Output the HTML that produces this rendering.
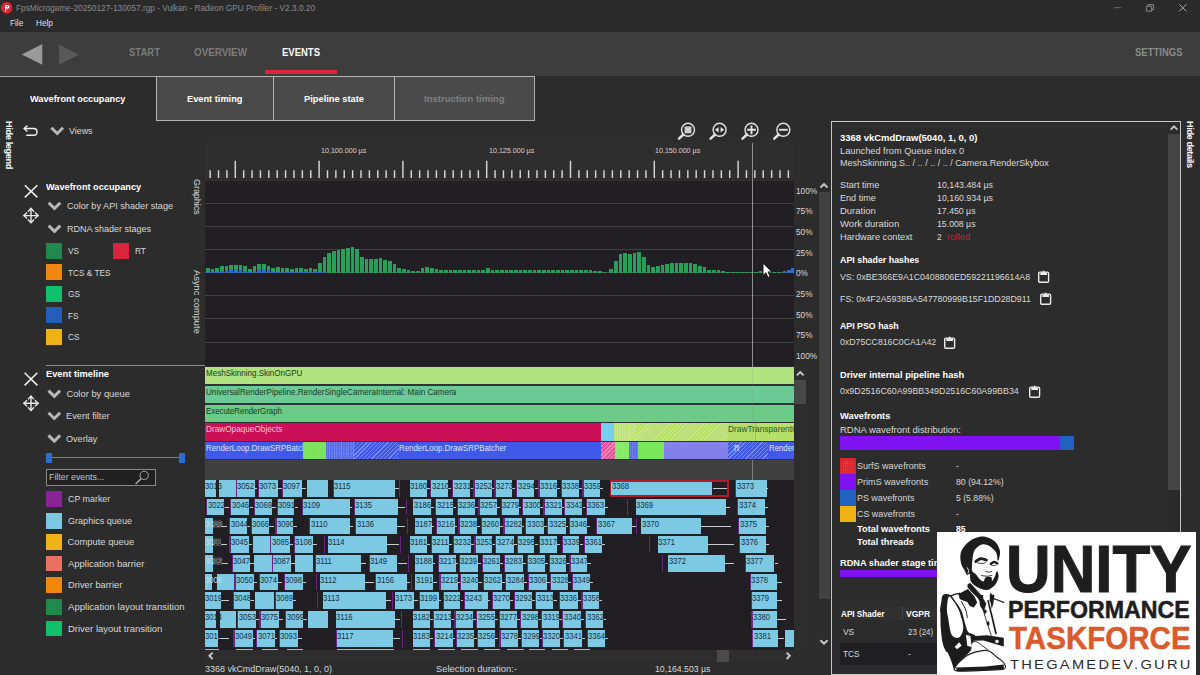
<!DOCTYPE html>
<html><head><meta charset="utf-8"><title>Radeon GPU Profiler</title>
<style>
html,body{margin:0;padding:0;background:#2c2c2c;}
body{width:1200px;height:675px;overflow:hidden;position:relative;font-family:"Liberation Sans", sans-serif;}
.r div{position:absolute;}
.t span{position:absolute;white-space:pre;line-height:1;transform-origin:0 0;}
.c{position:absolute;overflow:hidden;}
.v{position:absolute;white-space:pre;line-height:1;transform-origin:0 0;transform:rotate(90deg);font-weight:700;color:#fff;}
svg{position:absolute;overflow:visible;}
</style></head><body>
<div class="r">
<div style="left:0.00px;top:0.00px;width:1200.00px;height:31.80px;background:#2a2a2a;"></div>
<div style="left:0.00px;top:31.80px;width:1200.00px;height:44.20px;background:#3d3d3d;"></div>
<div style="left:0.00px;top:76.00px;width:1200.00px;height:599.00px;background:#2c2c2c;"></div>
<div style="left:264.50px;top:70.00px;width:72.00px;height:4.00px;background:#d8283c;"></div>
<div style="left:0.00px;top:76.00px;width:156.50px;height:1.00px;background:#a4a4a4;"></div>
<div style="left:156.00px;top:76.00px;width:379.00px;height:44.70px;background:#4a4a4a;border:1px solid #b4b4b4;box-sizing:border-box;"></div>
<div style="left:273.00px;top:76.00px;width:1.00px;height:44.70px;background:#b4b4b4;"></div>
<div style="left:394.00px;top:76.00px;width:1.00px;height:44.70px;background:#b4b4b4;"></div>
<div style="left:45.90px;top:242.60px;width:16.30px;height:16.00px;background:#1f8a4c;"></div>
<div style="left:45.90px;top:264.30px;width:16.30px;height:16.00px;background:#f0880f;"></div>
<div style="left:45.90px;top:286.00px;width:16.30px;height:16.00px;background:#12c06a;"></div>
<div style="left:45.90px;top:307.40px;width:16.30px;height:16.00px;background:#215fb8;"></div>
<div style="left:45.90px;top:328.90px;width:16.30px;height:16.00px;background:#f0b215;"></div>
<div style="left:113.20px;top:242.60px;width:16.20px;height:16.00px;background:#d9263e;"></div>
<div style="left:46.00px;top:365.00px;width:159.00px;height:1.00px;background:#8a8a8a;"></div>
<div style="left:46.00px;top:457.20px;width:138.60px;height:1.10px;background:#7a8288;"></div>
<div style="left:46.00px;top:452.50px;width:5.90px;height:10.40px;background:#2a6fd0;"></div>
<div style="left:178.80px;top:452.50px;width:5.80px;height:10.40px;background:#2a6fd0;"></div>
<div style="left:46.00px;top:468.70px;width:109.60px;height:17.00px;background:#202020;border:1px solid #8a8a8a;box-sizing:border-box;"></div>
<div style="left:45.70px;top:491.40px;width:16.60px;height:15.80px;background:#8a2298;"></div>
<div style="left:45.70px;top:513.00px;width:16.60px;height:15.80px;background:#7bc8e2;"></div>
<div style="left:45.70px;top:534.30px;width:16.60px;height:15.80px;background:#f0b215;"></div>
<div style="left:45.70px;top:555.60px;width:16.60px;height:15.80px;background:#e87262;"></div>
<div style="left:45.70px;top:577.20px;width:16.60px;height:15.80px;background:#f0880f;"></div>
<div style="left:45.70px;top:599.20px;width:16.60px;height:15.80px;background:#1f8a4c;"></div>
<div style="left:45.70px;top:620.50px;width:16.60px;height:15.80px;background:#12c06a;"></div>
<div style="left:204.80px;top:141.80px;width:589.40px;height:38.80px;background:#2e2e2e;"></div>
<div style="left:204.80px;top:180.60px;width:589.40px;height:185.90px;background:#211f23;"></div>
<div style="left:204.80px;top:202.82px;width:589.40px;height:1.00px;background:#424244;"></div>
<div style="left:204.80px;top:225.94px;width:589.40px;height:1.00px;background:#424244;"></div>
<div style="left:204.80px;top:249.06px;width:589.40px;height:1.00px;background:#424244;"></div>
<div style="left:204.80px;top:272.18px;width:589.40px;height:1.00px;background:#505052;"></div>
<div style="left:204.80px;top:295.30px;width:589.40px;height:1.00px;background:#424244;"></div>
<div style="left:204.80px;top:318.42px;width:589.40px;height:1.00px;background:#424244;"></div>
<div style="left:204.80px;top:341.54px;width:589.40px;height:1.00px;background:#424244;"></div>
<svg style="left:0;top:0" width="1200" height="200" viewBox="0 0 1200 200"><path d="M210.16 170.3V178M218.54 170.3V178M226.92 170.3V178M235.30 160.8V178M243.68 170.3V178M252.06 170.3V178M260.44 170.3V178M268.82 170.3V178M277.20 170.3V178M285.58 170.3V178M293.96 170.3V178M302.34 170.3V178M310.72 170.3V178M319.10 160.8V178M327.48 170.3V178M335.86 170.3V178M344.24 170.3V178M352.62 170.3V178M361.00 170.3V178M369.38 170.3V178M377.76 170.3V178M386.14 170.3V178M394.52 170.3V178M402.90 160.8V178M411.28 170.3V178M419.66 170.3V178M428.04 170.3V178M436.42 170.3V178M444.80 170.3V178M453.18 170.3V178M461.56 170.3V178M469.94 170.3V178M478.32 170.3V178M486.70 160.8V178M495.08 170.3V178M503.46 170.3V178M511.84 170.3V178M520.22 170.3V178M528.60 170.3V178M536.98 170.3V178M545.36 170.3V178M553.74 170.3V178M562.12 170.3V178M570.50 160.8V178M578.88 170.3V178M587.26 170.3V178M595.64 170.3V178M604.02 170.3V178M612.40 170.3V178M620.78 170.3V178M629.16 170.3V178M637.54 170.3V178M645.92 170.3V178M654.30 160.8V178M662.68 170.3V178M671.06 170.3V178M679.44 170.3V178M687.82 170.3V178M696.20 170.3V178M704.58 170.3V178M712.96 170.3V178M721.34 170.3V178M729.72 170.3V178M738.10 160.8V178M746.48 170.3V178M754.86 170.3V178M763.24 170.3V178M771.62 170.3V178M780.00 170.3V178M788.38 170.3V178" stroke="#d6d6d6" stroke-width="1.45" fill="none"/></svg>
<div style="left:205.83px;top:267.60px;width:3.70px;height:5.00px;background:#27a05a;"></div>
<div style="left:205.83px;top:271.60px;width:3.70px;height:1.00px;background:#2a70d2;"></div>
<div style="left:210.50px;top:269.30px;width:3.70px;height:3.30px;background:#27a05a;"></div>
<div style="left:210.50px;top:272.10px;width:3.70px;height:0.50px;background:#2a70d2;"></div>
<div style="left:215.17px;top:267.60px;width:3.70px;height:5.00px;background:#27a05a;"></div>
<div style="left:215.17px;top:271.60px;width:3.70px;height:1.00px;background:#2a70d2;"></div>
<div style="left:219.83px;top:265.60px;width:3.70px;height:7.00px;background:#27a05a;"></div>
<div style="left:219.83px;top:270.60px;width:3.70px;height:2.00px;background:#2a70d2;"></div>
<div style="left:224.50px;top:265.90px;width:3.70px;height:6.70px;background:#27a05a;"></div>
<div style="left:224.50px;top:270.40px;width:3.70px;height:2.20px;background:#2a70d2;"></div>
<div style="left:229.17px;top:264.60px;width:3.70px;height:8.00px;background:#27a05a;"></div>
<div style="left:229.17px;top:269.30px;width:3.70px;height:3.30px;background:#2a70d2;"></div>
<div style="left:233.83px;top:264.80px;width:3.70px;height:7.80px;background:#27a05a;"></div>
<div style="left:233.83px;top:269.30px;width:3.70px;height:3.30px;background:#2a70d2;"></div>
<div style="left:238.50px;top:265.40px;width:3.70px;height:7.20px;background:#27a05a;"></div>
<div style="left:238.50px;top:270.10px;width:3.70px;height:2.50px;background:#2a70d2;"></div>
<div style="left:243.17px;top:266.10px;width:3.70px;height:6.50px;background:#27a05a;"></div>
<div style="left:243.17px;top:271.10px;width:3.70px;height:1.50px;background:#2a70d2;"></div>
<div style="left:247.83px;top:269.30px;width:3.70px;height:3.30px;background:#27a05a;"></div>
<div style="left:247.83px;top:272.10px;width:3.70px;height:0.50px;background:#2a70d2;"></div>
<div style="left:252.50px;top:266.40px;width:3.70px;height:6.20px;background:#27a05a;"></div>
<div style="left:252.50px;top:271.10px;width:3.70px;height:1.50px;background:#2a70d2;"></div>
<div style="left:257.17px;top:264.40px;width:3.70px;height:8.20px;background:#27a05a;"></div>
<div style="left:257.17px;top:268.90px;width:3.70px;height:3.70px;background:#2a70d2;"></div>
<div style="left:261.83px;top:264.40px;width:3.70px;height:8.20px;background:#27a05a;"></div>
<div style="left:261.83px;top:269.10px;width:3.70px;height:3.50px;background:#2a70d2;"></div>
<div style="left:266.50px;top:265.80px;width:3.70px;height:6.80px;background:#27a05a;"></div>
<div style="left:266.50px;top:270.10px;width:3.70px;height:2.50px;background:#2a70d2;"></div>
<div style="left:271.17px;top:267.80px;width:3.70px;height:4.80px;background:#27a05a;"></div>
<div style="left:271.17px;top:271.60px;width:3.70px;height:1.00px;background:#2a70d2;"></div>
<div style="left:275.83px;top:267.30px;width:3.70px;height:5.30px;background:#27a05a;"></div>
<div style="left:275.83px;top:271.60px;width:3.70px;height:1.00px;background:#2a70d2;"></div>
<div style="left:280.50px;top:267.80px;width:3.70px;height:4.80px;background:#27a05a;"></div>
<div style="left:280.50px;top:271.60px;width:3.70px;height:1.00px;background:#2a70d2;"></div>
<div style="left:285.17px;top:267.80px;width:3.70px;height:4.80px;background:#27a05a;"></div>
<div style="left:285.17px;top:271.60px;width:3.70px;height:1.00px;background:#2a70d2;"></div>
<div style="left:289.83px;top:269.40px;width:3.70px;height:3.20px;background:#27a05a;"></div>
<div style="left:289.83px;top:272.10px;width:3.70px;height:0.50px;background:#2a70d2;"></div>
<div style="left:294.50px;top:267.80px;width:3.70px;height:4.80px;background:#27a05a;"></div>
<div style="left:294.50px;top:271.60px;width:3.70px;height:1.00px;background:#2a70d2;"></div>
<div style="left:299.17px;top:268.10px;width:3.70px;height:4.50px;background:#27a05a;"></div>
<div style="left:299.17px;top:271.60px;width:3.70px;height:1.00px;background:#2a70d2;"></div>
<div style="left:303.83px;top:268.90px;width:3.70px;height:3.70px;background:#27a05a;"></div>
<div style="left:303.83px;top:271.30px;width:3.70px;height:1.30px;background:#2a70d2;"></div>
<div style="left:308.50px;top:268.40px;width:3.70px;height:4.20px;background:#27a05a;"></div>
<div style="left:308.50px;top:270.90px;width:3.70px;height:1.70px;background:#2a70d2;"></div>
<div style="left:313.17px;top:268.90px;width:3.70px;height:3.70px;background:#27a05a;"></div>
<div style="left:313.17px;top:271.30px;width:3.70px;height:1.30px;background:#2a70d2;"></div>
<div style="left:317.83px;top:263.40px;width:3.70px;height:9.20px;background:#27a05a;"></div>
<div style="left:317.83px;top:271.60px;width:3.70px;height:1.00px;background:#2a70d2;"></div>
<div style="left:322.50px;top:257.30px;width:3.70px;height:15.30px;background:#27a05a;"></div>
<div style="left:322.50px;top:271.60px;width:3.70px;height:1.00px;background:#2a70d2;"></div>
<div style="left:327.17px;top:252.60px;width:3.70px;height:20.00px;background:#27a05a;"></div>
<div style="left:331.83px;top:250.80px;width:3.70px;height:21.80px;background:#27a05a;"></div>
<div style="left:336.50px;top:249.80px;width:3.70px;height:22.80px;background:#27a05a;"></div>
<div style="left:341.17px;top:249.10px;width:3.70px;height:23.50px;background:#27a05a;"></div>
<div style="left:345.83px;top:248.40px;width:3.70px;height:24.20px;background:#27a05a;"></div>
<div style="left:350.50px;top:247.30px;width:3.70px;height:25.30px;background:#27a05a;"></div>
<div style="left:355.17px;top:249.40px;width:3.70px;height:23.20px;background:#27a05a;"></div>
<div style="left:359.83px;top:257.30px;width:3.70px;height:15.30px;background:#27a05a;"></div>
<div style="left:364.50px;top:258.80px;width:3.70px;height:13.80px;background:#27a05a;"></div>
<div style="left:369.17px;top:259.30px;width:3.70px;height:13.30px;background:#27a05a;"></div>
<div style="left:373.83px;top:258.90px;width:3.70px;height:13.70px;background:#27a05a;"></div>
<div style="left:378.50px;top:258.10px;width:3.70px;height:14.50px;background:#27a05a;"></div>
<div style="left:383.17px;top:259.80px;width:3.70px;height:12.80px;background:#27a05a;"></div>
<div style="left:387.83px;top:260.60px;width:3.70px;height:12.00px;background:#27a05a;"></div>
<div style="left:392.50px;top:264.30px;width:3.70px;height:8.30px;background:#27a05a;"></div>
<div style="left:397.17px;top:268.40px;width:3.70px;height:4.20px;background:#27a05a;"></div>
<div style="left:401.87px;top:269.10px;width:3.70px;height:3.50px;background:#27a05a;"></div>
<div style="left:406.53px;top:270.10px;width:3.70px;height:2.50px;background:#27a05a;"></div>
<div style="left:411.20px;top:271.10px;width:3.70px;height:1.50px;background:#27a05a;"></div>
<div style="left:415.87px;top:270.60px;width:3.70px;height:2.00px;background:#27a05a;"></div>
<div style="left:420.53px;top:268.10px;width:3.70px;height:4.50px;background:#27a05a;"></div>
<div style="left:425.20px;top:267.10px;width:3.70px;height:5.50px;background:#27a05a;"></div>
<div style="left:429.87px;top:267.60px;width:3.70px;height:5.00px;background:#27a05a;"></div>
<div style="left:434.54px;top:269.10px;width:3.70px;height:3.50px;background:#27a05a;"></div>
<div style="left:439.20px;top:269.60px;width:3.70px;height:3.00px;background:#27a05a;"></div>
<div style="left:443.87px;top:270.10px;width:3.70px;height:2.50px;background:#27a05a;"></div>
<div style="left:448.54px;top:270.10px;width:3.70px;height:2.50px;background:#27a05a;"></div>
<div style="left:453.20px;top:270.10px;width:3.70px;height:2.50px;background:#27a05a;"></div>
<div style="left:457.87px;top:270.30px;width:3.70px;height:2.30px;background:#27a05a;"></div>
<div style="left:462.54px;top:270.30px;width:3.70px;height:2.30px;background:#27a05a;"></div>
<div style="left:467.20px;top:270.30px;width:3.70px;height:2.30px;background:#27a05a;"></div>
<div style="left:471.87px;top:270.30px;width:3.70px;height:2.30px;background:#27a05a;"></div>
<div style="left:476.54px;top:270.10px;width:3.70px;height:2.50px;background:#27a05a;"></div>
<div style="left:481.21px;top:269.60px;width:3.70px;height:3.00px;background:#27a05a;"></div>
<div style="left:485.87px;top:268.10px;width:3.70px;height:4.50px;background:#27a05a;"></div>
<div style="left:490.54px;top:269.60px;width:3.70px;height:3.00px;background:#27a05a;"></div>
<div style="left:495.21px;top:270.10px;width:3.70px;height:2.50px;background:#27a05a;"></div>
<div style="left:499.87px;top:270.10px;width:3.70px;height:2.50px;background:#27a05a;"></div>
<div style="left:504.54px;top:270.10px;width:3.70px;height:2.50px;background:#27a05a;"></div>
<div style="left:509.21px;top:270.30px;width:3.70px;height:2.30px;background:#27a05a;"></div>
<div style="left:513.87px;top:270.30px;width:3.70px;height:2.30px;background:#27a05a;"></div>
<div style="left:518.54px;top:270.10px;width:3.70px;height:2.50px;background:#27a05a;"></div>
<div style="left:523.21px;top:270.10px;width:3.70px;height:2.50px;background:#27a05a;"></div>
<div style="left:527.88px;top:270.30px;width:3.70px;height:2.30px;background:#27a05a;"></div>
<div style="left:532.54px;top:270.10px;width:3.70px;height:2.50px;background:#27a05a;"></div>
<div style="left:537.21px;top:270.10px;width:3.70px;height:2.50px;background:#27a05a;"></div>
<div style="left:541.88px;top:270.30px;width:3.70px;height:2.30px;background:#27a05a;"></div>
<div style="left:546.54px;top:270.10px;width:3.70px;height:2.50px;background:#27a05a;"></div>
<div style="left:551.21px;top:270.10px;width:3.70px;height:2.50px;background:#27a05a;"></div>
<div style="left:555.88px;top:270.10px;width:3.70px;height:2.50px;background:#27a05a;"></div>
<div style="left:560.54px;top:270.30px;width:3.70px;height:2.30px;background:#27a05a;"></div>
<div style="left:565.21px;top:270.10px;width:3.70px;height:2.50px;background:#27a05a;"></div>
<div style="left:569.88px;top:270.30px;width:3.70px;height:2.30px;background:#27a05a;"></div>
<div style="left:574.55px;top:270.10px;width:3.70px;height:2.50px;background:#27a05a;"></div>
<div style="left:579.21px;top:270.30px;width:3.70px;height:2.30px;background:#27a05a;"></div>
<div style="left:583.88px;top:270.30px;width:3.70px;height:2.30px;background:#27a05a;"></div>
<div style="left:588.55px;top:270.30px;width:3.70px;height:2.30px;background:#27a05a;"></div>
<div style="left:593.21px;top:270.60px;width:3.70px;height:2.00px;background:#27a05a;"></div>
<div style="left:597.88px;top:271.10px;width:3.70px;height:1.50px;background:#27a05a;"></div>
<div style="left:602.55px;top:271.60px;width:3.70px;height:1.00px;background:#27a05a;"></div>
<div style="left:609.17px;top:269.30px;width:3.70px;height:3.30px;background:#27a05a;"></div>
<div style="left:613.83px;top:260.90px;width:3.70px;height:11.70px;background:#27a05a;"></div>
<div style="left:618.50px;top:254.30px;width:3.70px;height:18.30px;background:#27a05a;"></div>
<div style="left:623.17px;top:253.10px;width:3.70px;height:19.50px;background:#27a05a;"></div>
<div style="left:627.83px;top:253.80px;width:3.70px;height:18.80px;background:#27a05a;"></div>
<div style="left:632.50px;top:253.10px;width:3.70px;height:19.50px;background:#27a05a;"></div>
<div style="left:637.17px;top:251.80px;width:3.70px;height:20.80px;background:#27a05a;"></div>
<div style="left:641.83px;top:256.80px;width:3.70px;height:15.80px;background:#27a05a;"></div>
<div style="left:646.50px;top:265.10px;width:3.70px;height:7.50px;background:#27a05a;"></div>
<div style="left:651.17px;top:266.80px;width:3.70px;height:5.80px;background:#27a05a;"></div>
<div style="left:655.83px;top:265.90px;width:3.70px;height:6.70px;background:#27a05a;"></div>
<div style="left:660.50px;top:264.80px;width:3.70px;height:7.80px;background:#27a05a;"></div>
<div style="left:665.17px;top:263.90px;width:3.70px;height:8.70px;background:#27a05a;"></div>
<div style="left:669.83px;top:262.90px;width:3.70px;height:9.70px;background:#27a05a;"></div>
<div style="left:674.50px;top:263.40px;width:3.70px;height:9.20px;background:#27a05a;"></div>
<div style="left:679.17px;top:263.40px;width:3.70px;height:9.20px;background:#27a05a;"></div>
<div style="left:683.83px;top:263.40px;width:3.70px;height:9.20px;background:#27a05a;"></div>
<div style="left:688.50px;top:263.40px;width:3.70px;height:9.20px;background:#27a05a;"></div>
<div style="left:693.17px;top:263.90px;width:3.70px;height:8.70px;background:#27a05a;"></div>
<div style="left:697.83px;top:265.90px;width:3.70px;height:6.70px;background:#27a05a;"></div>
<div style="left:702.50px;top:267.10px;width:3.70px;height:5.50px;background:#27a05a;"></div>
<div style="left:707.17px;top:270.10px;width:3.70px;height:2.50px;background:#27a05a;"></div>
<div style="left:711.83px;top:270.40px;width:3.70px;height:2.20px;background:#27a05a;"></div>
<div style="left:716.50px;top:270.40px;width:3.70px;height:2.20px;background:#27a05a;"></div>
<div style="left:721.17px;top:271.40px;width:3.70px;height:1.20px;background:#27a05a;"></div>
<div style="left:725.83px;top:272.10px;width:3.70px;height:0.50px;background:#27a05a;"></div>
<div style="left:730.50px;top:271.80px;width:3.70px;height:0.80px;background:#27a05a;"></div>
<div style="left:735.17px;top:271.60px;width:3.70px;height:1.00px;background:#27a05a;"></div>
<div style="left:739.83px;top:271.60px;width:3.70px;height:1.00px;background:#27a05a;"></div>
<div style="left:744.50px;top:271.60px;width:3.70px;height:1.00px;background:#27a05a;"></div>
<div style="left:749.17px;top:271.60px;width:3.70px;height:1.00px;background:#27a05a;"></div>
<div style="left:753.83px;top:271.60px;width:3.70px;height:1.00px;background:#27a05a;"></div>
<div style="left:758.50px;top:271.40px;width:3.70px;height:1.20px;background:#27a05a;"></div>
<div style="left:763.17px;top:271.40px;width:3.70px;height:1.20px;background:#27a05a;"></div>
<div style="left:767.83px;top:271.40px;width:3.70px;height:1.20px;background:#27a05a;"></div>
<div style="left:772.50px;top:271.60px;width:3.70px;height:1.00px;background:#27a05a;"></div>
<div style="left:777.17px;top:271.60px;width:3.70px;height:1.00px;background:#27a05a;"></div>
<div style="left:782.50px;top:270.60px;width:3.70px;height:2.00px;background:#2a70d2;"></div>
<div style="left:787.20px;top:269.60px;width:3.70px;height:3.00px;background:#2a70d2;"></div>
<div style="left:791.00px;top:267.60px;width:3.20px;height:5.00px;background:#2a70d2;"></div>
<div style="left:204.90px;top:366.50px;width:589.20px;height:93.50px;background:#323234;"></div>
<div style="left:204.90px;top:367.10px;width:589.20px;height:17.00px;background:#b0e27e;"></div>
<div style="left:204.90px;top:385.90px;width:589.20px;height:17.10px;background:#6acb94;"></div>
<div style="left:204.90px;top:404.70px;width:589.20px;height:17.30px;background:#6acc86;"></div>
<div style="left:204.90px;top:423.00px;width:396.00px;height:17.70px;background:#cc1058;"></div>
<div style="left:600.90px;top:423.00px;width:12.70px;height:17.70px;background:#74d0ee;"></div>
<div style="left:613.60px;top:423.00px;width:180.50px;height:17.70px;background:#b6e06a;"></div>
<div style="left:613.60px;top:423.00px;width:22.40px;height:17.70px;background:transparent;background-image:conic-gradient(rgba(255,255,255,.30) 25%,transparent 0 50%,rgba(255,255,255,.30) 0 75%,transparent 0);background-size:2.4px 2.4px;"></div>
<div style="left:636.00px;top:423.00px;width:91.00px;height:17.70px;background:transparent;background-image:repeating-linear-gradient(135deg,rgba(255,255,255,.28) 0 0.9px,transparent 0.9px 3px);"></div>
<div style="left:754.80px;top:423.00px;width:1.40px;height:17.70px;background:#5fc4e0;"></div>
<div style="left:204.90px;top:442.00px;width:589.20px;height:17.00px;background:#4159e8;"></div>
<div style="left:302.70px;top:442.00px;width:23.70px;height:17.00px;background:#72e252;background-image:conic-gradient(rgba(255,255,255,.12) 25%,transparent 0 50%,rgba(255,255,255,.12) 0 75%,transparent 0);background-size:2.4px 2.4px;"></div>
<div style="left:326.40px;top:442.00px;width:27.60px;height:17.00px;background:transparent;background-image:conic-gradient(rgba(255,255,255,.30) 25%,transparent 0 50%,rgba(255,255,255,.30) 0 75%,transparent 0);background-size:2.4px 2.4px;"></div>
<div style="left:354.00px;top:442.00px;width:44.60px;height:17.00px;background:transparent;background-image:repeating-linear-gradient(135deg,rgba(255,255,255,.3) 0 0.9px,transparent 0.9px 3px);"></div>
<div style="left:600.90px;top:442.00px;width:14.00px;height:17.00px;background:#e8529c;background-image:repeating-linear-gradient(135deg,rgba(255,255,255,.35) 0 0.9px,transparent 0.9px 3px);"></div>
<div style="left:614.90px;top:442.00px;width:14.00px;height:17.00px;background:#78e858;background-image:conic-gradient(rgba(255,255,255,.22) 25%,transparent 0 50%,rgba(255,255,255,.22) 0 75%,transparent 0);background-size:2.4px 2.4px;"></div>
<div style="left:628.90px;top:442.00px;width:9.20px;height:17.00px;background:#5262e8;background-image:conic-gradient(rgba(255,255,255,.2) 25%,transparent 0 50%,rgba(255,255,255,.2) 0 75%,transparent 0);background-size:2.4px 2.4px;"></div>
<div style="left:638.10px;top:442.00px;width:25.80px;height:17.00px;background:#78e858;"></div>
<div style="left:663.90px;top:442.00px;width:64.40px;height:17.00px;background:#8282ea;"></div>
<div style="left:728.30px;top:442.00px;width:40.20px;height:17.00px;background:transparent;background-image:repeating-linear-gradient(135deg,rgba(255,255,255,.3) 0 0.9px,transparent 0.9px 3px);"></div>
<div style="left:204.90px;top:460.00px;width:589.20px;height:19.50px;background:#404040;"></div>
<div style="left:204.90px;top:479.50px;width:589.20px;height:170.70px;background:#211f23;"></div>
<div style="left:205.00px;top:480.20px;width:10.80px;height:16.60px;background:#7cc9e4;"></div>
<div style="left:219.20px;top:480.20px;width:16.60px;height:16.60px;background:#7cc9e4;"></div>
<div style="left:235.85px;top:480.20px;width:1.55px;height:16.60px;background:#6c2484;"></div>
<div style="left:237.00px;top:480.20px;width:18.00px;height:16.60px;background:#7cc9e4;"></div>
<div style="left:255.00px;top:488.00px;width:2.00px;height:1.00px;background:#c8ccd0;"></div>
<div style="left:257.55px;top:480.20px;width:1.55px;height:16.60px;background:#6c2484;"></div>
<div style="left:258.70px;top:480.20px;width:19.60px;height:16.60px;background:#7cc9e4;"></div>
<div style="left:278.30px;top:488.00px;width:3.40px;height:1.00px;background:#c8ccd0;"></div>
<div style="left:281.65px;top:480.20px;width:1.55px;height:16.60px;background:#6c2484;"></div>
<div style="left:282.80px;top:480.20px;width:19.20px;height:16.60px;background:#7cc9e4;"></div>
<div style="left:302.00px;top:488.00px;width:4.00px;height:1.00px;background:#c8ccd0;"></div>
<div style="left:306.70px;top:480.20px;width:21.60px;height:16.60px;background:#7cc9e4;"></div>
<div style="left:332.65px;top:480.20px;width:1.55px;height:16.60px;background:#6c2484;"></div>
<div style="left:333.80px;top:480.20px;width:60.90px;height:16.60px;background:#7cc9e4;"></div>
<div style="left:394.70px;top:488.00px;width:4.30px;height:1.00px;background:#c8ccd0;"></div>
<div style="left:399.20px;top:480.20px;width:1.10px;height:16.60px;background:#6c2484;"></div>
<div style="left:409.70px;top:480.20px;width:17.50px;height:16.60px;background:#7cc9e4;"></div>
<div style="left:427.20px;top:488.00px;width:2.80px;height:1.00px;background:#c8ccd0;"></div>
<div style="left:430.05px;top:480.20px;width:1.55px;height:16.60px;background:#6c2484;"></div>
<div style="left:431.20px;top:480.20px;width:17.10px;height:16.60px;background:#7cc9e4;"></div>
<div style="left:448.30px;top:488.00px;width:2.70px;height:1.00px;background:#c8ccd0;"></div>
<div style="left:452.15px;top:480.20px;width:1.55px;height:16.60px;background:#6c2484;"></div>
<div style="left:453.30px;top:480.20px;width:16.70px;height:16.60px;background:#7cc9e4;"></div>
<div style="left:470.00px;top:488.00px;width:3.00px;height:1.00px;background:#c8ccd0;"></div>
<div style="left:473.35px;top:480.20px;width:1.55px;height:16.60px;background:#6c2484;"></div>
<div style="left:474.50px;top:480.20px;width:17.20px;height:16.60px;background:#7cc9e4;"></div>
<div style="left:491.70px;top:488.00px;width:2.30px;height:1.00px;background:#c8ccd0;"></div>
<div style="left:494.35px;top:480.20px;width:1.55px;height:16.60px;background:#6c2484;"></div>
<div style="left:495.50px;top:480.20px;width:16.70px;height:16.60px;background:#7cc9e4;"></div>
<div style="left:512.20px;top:488.00px;width:2.80px;height:1.00px;background:#c8ccd0;"></div>
<div style="left:516.05px;top:480.20px;width:1.55px;height:16.60px;background:#6c2484;"></div>
<div style="left:517.20px;top:480.20px;width:17.30px;height:16.60px;background:#7cc9e4;"></div>
<div style="left:534.50px;top:488.00px;width:3.50px;height:1.00px;background:#c8ccd0;"></div>
<div style="left:538.35px;top:480.20px;width:1.55px;height:16.60px;background:#6c2484;"></div>
<div style="left:539.50px;top:480.20px;width:17.20px;height:16.60px;background:#7cc9e4;"></div>
<div style="left:556.70px;top:488.00px;width:3.30px;height:1.00px;background:#c8ccd0;"></div>
<div style="left:560.55px;top:480.20px;width:1.55px;height:16.60px;background:#6c2484;"></div>
<div style="left:561.70px;top:480.20px;width:17.10px;height:16.60px;background:#7cc9e4;"></div>
<div style="left:578.80px;top:488.00px;width:3.20px;height:1.00px;background:#c8ccd0;"></div>
<div style="left:582.35px;top:480.20px;width:1.55px;height:16.60px;background:#6c2484;"></div>
<div style="left:583.50px;top:480.20px;width:16.50px;height:16.60px;background:#7cc9e4;"></div>
<div style="left:600.00px;top:488.00px;width:3.00px;height:1.00px;background:#c8ccd0;"></div>
<div style="left:609.50px;top:479.50px;width:119.00px;height:17.10px;background:transparent;border:2px solid #b01c2c;box-sizing:border-box;"></div>
<div style="left:611.30px;top:481.60px;width:101.20px;height:13.20px;background:#7cc9e4;"></div>
<div style="left:712.50px;top:488.00px;width:14.20px;height:1.00px;background:#c8ccd0;"></div>
<div style="left:735.05px;top:480.20px;width:1.55px;height:16.60px;background:#6c2484;"></div>
<div style="left:736.20px;top:480.20px;width:30.50px;height:16.60px;background:#7cc9e4;"></div>
<div style="left:766.70px;top:488.00px;width:1.80px;height:1.00px;background:#c8ccd0;"></div>
<div style="left:206.05px;top:498.80px;width:1.55px;height:16.70px;background:#6c2484;"></div>
<div style="left:207.20px;top:498.80px;width:17.00px;height:16.70px;background:#7cc9e4;"></div>
<div style="left:224.20px;top:506.65px;width:4.80px;height:1.00px;background:#c8ccd0;"></div>
<div style="left:230.15px;top:498.80px;width:1.55px;height:16.70px;background:#6c2484;"></div>
<div style="left:231.30px;top:498.80px;width:18.20px;height:16.70px;background:#7cc9e4;"></div>
<div style="left:249.50px;top:506.65px;width:3.50px;height:1.00px;background:#c8ccd0;"></div>
<div style="left:253.85px;top:498.80px;width:1.55px;height:16.70px;background:#6c2484;"></div>
<div style="left:255.00px;top:498.80px;width:17.00px;height:16.70px;background:#7cc9e4;"></div>
<div style="left:272.00px;top:506.65px;width:4.00px;height:1.00px;background:#c8ccd0;"></div>
<div style="left:276.65px;top:498.80px;width:1.55px;height:16.70px;background:#6c2484;"></div>
<div style="left:277.80px;top:498.80px;width:16.70px;height:16.70px;background:#7cc9e4;"></div>
<div style="left:294.50px;top:506.65px;width:3.50px;height:1.00px;background:#c8ccd0;"></div>
<div style="left:301.65px;top:498.80px;width:1.55px;height:16.70px;background:#6c2484;"></div>
<div style="left:302.80px;top:498.80px;width:46.90px;height:16.70px;background:#7cc9e4;"></div>
<div style="left:349.70px;top:506.65px;width:2.30px;height:1.00px;background:#c8ccd0;"></div>
<div style="left:353.85px;top:498.80px;width:1.55px;height:16.70px;background:#6c2484;"></div>
<div style="left:355.00px;top:498.80px;width:42.50px;height:16.70px;background:#7cc9e4;"></div>
<div style="left:397.50px;top:506.65px;width:7.50px;height:1.00px;background:#c8ccd0;"></div>
<div style="left:405.80px;top:498.80px;width:1.10px;height:16.70px;background:#6c2484;"></div>
<div style="left:413.30px;top:498.80px;width:17.90px;height:16.70px;background:#7cc9e4;"></div>
<div style="left:431.20px;top:506.65px;width:2.80px;height:1.00px;background:#c8ccd0;"></div>
<div style="left:435.05px;top:498.80px;width:1.55px;height:16.70px;background:#6c2484;"></div>
<div style="left:436.20px;top:498.80px;width:17.10px;height:16.70px;background:#7cc9e4;"></div>
<div style="left:453.30px;top:506.65px;width:2.70px;height:1.00px;background:#c8ccd0;"></div>
<div style="left:456.85px;top:498.80px;width:1.55px;height:16.70px;background:#6c2484;"></div>
<div style="left:458.00px;top:498.80px;width:16.70px;height:16.70px;background:#7cc9e4;"></div>
<div style="left:474.70px;top:506.65px;width:3.30px;height:1.00px;background:#c8ccd0;"></div>
<div style="left:478.35px;top:498.80px;width:1.55px;height:16.70px;background:#6c2484;"></div>
<div style="left:479.50px;top:498.80px;width:17.50px;height:16.70px;background:#7cc9e4;"></div>
<div style="left:497.00px;top:506.65px;width:3.00px;height:1.00px;background:#c8ccd0;"></div>
<div style="left:500.55px;top:498.80px;width:1.55px;height:16.70px;background:#6c2484;"></div>
<div style="left:501.70px;top:498.80px;width:17.00px;height:16.70px;background:#7cc9e4;"></div>
<div style="left:518.70px;top:506.65px;width:2.30px;height:1.00px;background:#c8ccd0;"></div>
<div style="left:522.15px;top:498.80px;width:1.55px;height:16.70px;background:#6c2484;"></div>
<div style="left:523.30px;top:498.80px;width:16.70px;height:16.70px;background:#7cc9e4;"></div>
<div style="left:540.00px;top:506.65px;width:3.00px;height:1.00px;background:#c8ccd0;"></div>
<div style="left:543.35px;top:498.80px;width:1.55px;height:16.70px;background:#6c2484;"></div>
<div style="left:544.50px;top:498.80px;width:17.20px;height:16.70px;background:#7cc9e4;"></div>
<div style="left:561.70px;top:506.65px;width:2.30px;height:1.00px;background:#c8ccd0;"></div>
<div style="left:564.15px;top:498.80px;width:1.55px;height:16.70px;background:#6c2484;"></div>
<div style="left:565.30px;top:498.80px;width:17.20px;height:16.70px;background:#7cc9e4;"></div>
<div style="left:582.50px;top:506.65px;width:2.50px;height:1.00px;background:#c8ccd0;"></div>
<div style="left:585.85px;top:498.80px;width:1.55px;height:16.70px;background:#6c2484;"></div>
<div style="left:587.00px;top:498.80px;width:17.70px;height:16.70px;background:#7cc9e4;"></div>
<div style="left:604.70px;top:506.65px;width:3.30px;height:1.00px;background:#c8ccd0;"></div>
<div style="left:627.30px;top:498.80px;width:1.10px;height:16.70px;background:#6c2484;"></div>
<div style="left:635.80px;top:498.80px;width:90.00px;height:16.70px;background:#7cc9e4;"></div>
<div style="left:725.80px;top:506.65px;width:4.20px;height:1.00px;background:#c8ccd0;"></div>
<div style="left:737.15px;top:498.80px;width:1.55px;height:16.70px;background:#6c2484;"></div>
<div style="left:738.30px;top:498.80px;width:26.70px;height:16.70px;background:#7cc9e4;"></div>
<div style="left:765.00px;top:506.65px;width:3.00px;height:1.00px;background:#c8ccd0;"></div>
<div style="left:205.00px;top:517.70px;width:8.00px;height:16.60px;background:#7cc9e4;"></div>
<div style="left:213.00px;top:525.50px;width:14.00px;height:1.00px;background:#c8ccd0;"></div>
<div style="left:229.05px;top:517.70px;width:1.55px;height:16.60px;background:#6c2484;"></div>
<div style="left:230.20px;top:517.70px;width:16.80px;height:16.60px;background:#7cc9e4;"></div>
<div style="left:247.00px;top:525.50px;width:3.00px;height:1.00px;background:#c8ccd0;"></div>
<div style="left:250.85px;top:517.70px;width:1.55px;height:16.60px;background:#6c2484;"></div>
<div style="left:252.00px;top:517.70px;width:17.20px;height:16.60px;background:#7cc9e4;"></div>
<div style="left:269.20px;top:525.50px;width:4.80px;height:1.00px;background:#c8ccd0;"></div>
<div style="left:275.35px;top:517.70px;width:1.55px;height:16.60px;background:#6c2484;"></div>
<div style="left:276.50px;top:517.70px;width:16.80px;height:16.60px;background:#7cc9e4;"></div>
<div style="left:293.30px;top:525.50px;width:3.70px;height:1.00px;background:#c8ccd0;"></div>
<div style="left:309.15px;top:517.70px;width:1.55px;height:16.60px;background:#6c2484;"></div>
<div style="left:310.30px;top:517.70px;width:39.40px;height:16.60px;background:#7cc9e4;"></div>
<div style="left:349.70px;top:525.50px;width:3.30px;height:1.00px;background:#c8ccd0;"></div>
<div style="left:355.05px;top:517.70px;width:1.55px;height:16.60px;background:#6c2484;"></div>
<div style="left:356.20px;top:517.70px;width:40.50px;height:16.60px;background:#7cc9e4;"></div>
<div style="left:396.70px;top:525.50px;width:8.60px;height:1.00px;background:#c8ccd0;"></div>
<div style="left:406.50px;top:517.70px;width:1.10px;height:16.60px;background:#6c2484;"></div>
<div style="left:414.50px;top:517.70px;width:17.20px;height:16.60px;background:#7cc9e4;"></div>
<div style="left:431.70px;top:525.50px;width:2.30px;height:1.00px;background:#c8ccd0;"></div>
<div style="left:435.85px;top:517.70px;width:1.55px;height:16.60px;background:#6c2484;"></div>
<div style="left:437.00px;top:517.70px;width:17.50px;height:16.60px;background:#7cc9e4;"></div>
<div style="left:454.50px;top:525.50px;width:2.50px;height:1.00px;background:#c8ccd0;"></div>
<div style="left:458.35px;top:517.70px;width:1.55px;height:16.60px;background:#6c2484;"></div>
<div style="left:459.50px;top:517.70px;width:17.70px;height:16.60px;background:#7cc9e4;"></div>
<div style="left:477.20px;top:525.50px;width:2.80px;height:1.00px;background:#c8ccd0;"></div>
<div style="left:480.85px;top:517.70px;width:1.55px;height:16.60px;background:#6c2484;"></div>
<div style="left:482.00px;top:517.70px;width:17.70px;height:16.60px;background:#7cc9e4;"></div>
<div style="left:499.70px;top:525.50px;width:3.30px;height:1.00px;background:#c8ccd0;"></div>
<div style="left:503.35px;top:517.70px;width:1.55px;height:16.60px;background:#6c2484;"></div>
<div style="left:504.50px;top:517.70px;width:17.20px;height:16.60px;background:#7cc9e4;"></div>
<div style="left:521.70px;top:525.50px;width:2.30px;height:1.00px;background:#c8ccd0;"></div>
<div style="left:525.05px;top:517.70px;width:1.55px;height:16.60px;background:#6c2484;"></div>
<div style="left:526.20px;top:517.70px;width:17.60px;height:16.60px;background:#7cc9e4;"></div>
<div style="left:543.80px;top:525.50px;width:3.20px;height:1.00px;background:#c8ccd0;"></div>
<div style="left:547.15px;top:517.70px;width:1.55px;height:16.60px;background:#6c2484;"></div>
<div style="left:548.30px;top:517.70px;width:17.50px;height:16.60px;background:#7cc9e4;"></div>
<div style="left:565.80px;top:525.50px;width:2.20px;height:1.00px;background:#c8ccd0;"></div>
<div style="left:568.85px;top:517.70px;width:1.55px;height:16.60px;background:#6c2484;"></div>
<div style="left:570.00px;top:517.70px;width:17.00px;height:16.60px;background:#7cc9e4;"></div>
<div style="left:587.00px;top:525.50px;width:3.00px;height:1.00px;background:#c8ccd0;"></div>
<div style="left:596.05px;top:517.70px;width:1.55px;height:16.60px;background:#6c2484;"></div>
<div style="left:597.20px;top:517.70px;width:34.80px;height:16.60px;background:#7cc9e4;"></div>
<div style="left:632.00px;top:525.50px;width:4.00px;height:1.00px;background:#c8ccd0;"></div>
<div style="left:636.20px;top:517.70px;width:1.10px;height:16.60px;background:#6c2484;"></div>
<div style="left:641.30px;top:517.70px;width:59.90px;height:16.60px;background:#7cc9e4;"></div>
<div style="left:701.20px;top:525.50px;width:29.60px;height:1.00px;background:#c8ccd0;"></div>
<div style="left:738.05px;top:517.70px;width:1.55px;height:16.60px;background:#6c2484;"></div>
<div style="left:739.20px;top:517.70px;width:26.60px;height:16.60px;background:#7cc9e4;"></div>
<div style="left:765.80px;top:525.50px;width:3.20px;height:1.00px;background:#c8ccd0;"></div>
<div style="left:205.00px;top:536.30px;width:8.00px;height:16.70px;background:#7cc9e4;"></div>
<div style="left:213.00px;top:544.15px;width:14.00px;height:1.00px;background:#c8ccd0;"></div>
<div style="left:229.35px;top:536.30px;width:1.55px;height:16.70px;background:#6c2484;"></div>
<div style="left:230.50px;top:536.30px;width:18.20px;height:16.70px;background:#7cc9e4;"></div>
<div style="left:248.70px;top:544.15px;width:3.30px;height:1.00px;background:#c8ccd0;"></div>
<div style="left:253.30px;top:536.30px;width:17.00px;height:16.70px;background:#7cc9e4;"></div>
<div style="left:270.05px;top:536.30px;width:1.55px;height:16.70px;background:#6c2484;"></div>
<div style="left:271.20px;top:536.30px;width:18.80px;height:16.70px;background:#7cc9e4;"></div>
<div style="left:290.00px;top:544.15px;width:3.00px;height:1.00px;background:#c8ccd0;"></div>
<div style="left:293.55px;top:536.30px;width:1.55px;height:16.70px;background:#6c2484;"></div>
<div style="left:294.70px;top:536.30px;width:18.30px;height:16.70px;background:#7cc9e4;"></div>
<div style="left:313.00px;top:544.15px;width:4.00px;height:1.00px;background:#c8ccd0;"></div>
<div style="left:324.20px;top:536.30px;width:1.10px;height:16.70px;background:#6c2484;"></div>
<div style="left:328.00px;top:536.30px;width:59.00px;height:16.70px;background:#7cc9e4;"></div>
<div style="left:387.00px;top:544.15px;width:12.00px;height:1.00px;background:#c8ccd0;"></div>
<div style="left:400.00px;top:536.30px;width:1.10px;height:16.70px;background:#6c2484;"></div>
<div style="left:409.70px;top:536.30px;width:17.30px;height:16.70px;background:#7cc9e4;"></div>
<div style="left:427.00px;top:544.15px;width:3.00px;height:1.00px;background:#c8ccd0;"></div>
<div style="left:430.85px;top:536.30px;width:1.55px;height:16.70px;background:#6c2484;"></div>
<div style="left:432.00px;top:536.30px;width:17.20px;height:16.70px;background:#7cc9e4;"></div>
<div style="left:449.20px;top:544.15px;width:2.80px;height:1.00px;background:#c8ccd0;"></div>
<div style="left:452.55px;top:536.30px;width:1.55px;height:16.70px;background:#6c2484;"></div>
<div style="left:453.70px;top:536.30px;width:17.50px;height:16.70px;background:#7cc9e4;"></div>
<div style="left:471.20px;top:544.15px;width:2.80px;height:1.00px;background:#c8ccd0;"></div>
<div style="left:474.35px;top:536.30px;width:1.55px;height:16.70px;background:#6c2484;"></div>
<div style="left:475.50px;top:536.30px;width:16.70px;height:16.70px;background:#7cc9e4;"></div>
<div style="left:492.20px;top:544.15px;width:2.80px;height:1.00px;background:#c8ccd0;"></div>
<div style="left:495.05px;top:536.30px;width:1.55px;height:16.70px;background:#6c2484;"></div>
<div style="left:496.20px;top:536.30px;width:17.50px;height:16.70px;background:#7cc9e4;"></div>
<div style="left:513.70px;top:544.15px;width:3.30px;height:1.00px;background:#c8ccd0;"></div>
<div style="left:516.65px;top:536.30px;width:1.55px;height:16.70px;background:#6c2484;"></div>
<div style="left:517.80px;top:536.30px;width:16.70px;height:16.70px;background:#7cc9e4;"></div>
<div style="left:534.50px;top:544.15px;width:3.50px;height:1.00px;background:#c8ccd0;"></div>
<div style="left:538.85px;top:536.30px;width:1.55px;height:16.70px;background:#6c2484;"></div>
<div style="left:540.00px;top:536.30px;width:17.00px;height:16.70px;background:#7cc9e4;"></div>
<div style="left:557.00px;top:544.15px;width:3.00px;height:1.00px;background:#c8ccd0;"></div>
<div style="left:561.65px;top:536.30px;width:1.55px;height:16.70px;background:#6c2484;"></div>
<div style="left:562.80px;top:536.30px;width:16.70px;height:16.70px;background:#7cc9e4;"></div>
<div style="left:579.50px;top:544.15px;width:3.50px;height:1.00px;background:#c8ccd0;"></div>
<div style="left:583.85px;top:536.30px;width:1.55px;height:16.70px;background:#6c2484;"></div>
<div style="left:585.00px;top:536.30px;width:17.00px;height:16.70px;background:#7cc9e4;"></div>
<div style="left:602.00px;top:544.15px;width:3.00px;height:1.00px;background:#c8ccd0;"></div>
<div style="left:648.70px;top:536.30px;width:1.10px;height:16.70px;background:#6c2484;"></div>
<div style="left:658.00px;top:536.30px;width:50.00px;height:16.70px;background:#7cc9e4;"></div>
<div style="left:708.00px;top:544.15px;width:26.20px;height:1.00px;background:#c8ccd0;"></div>
<div style="left:739.15px;top:536.30px;width:1.55px;height:16.70px;background:#6c2484;"></div>
<div style="left:740.30px;top:536.30px;width:25.50px;height:16.70px;background:#7cc9e4;"></div>
<div style="left:765.80px;top:544.15px;width:3.20px;height:1.00px;background:#c8ccd0;"></div>
<div style="left:205.00px;top:555.20px;width:8.00px;height:16.60px;background:#7cc9e4;"></div>
<div style="left:213.00px;top:563.00px;width:15.00px;height:1.00px;background:#c8ccd0;"></div>
<div style="left:231.55px;top:555.20px;width:1.55px;height:16.60px;background:#6c2484;"></div>
<div style="left:232.70px;top:555.20px;width:17.30px;height:16.60px;background:#7cc9e4;"></div>
<div style="left:250.00px;top:563.00px;width:4.00px;height:1.00px;background:#c8ccd0;"></div>
<div style="left:254.20px;top:555.20px;width:17.80px;height:16.60px;background:#7cc9e4;"></div>
<div style="left:271.85px;top:555.20px;width:1.55px;height:16.60px;background:#6c2484;"></div>
<div style="left:273.00px;top:555.20px;width:17.80px;height:16.60px;background:#7cc9e4;"></div>
<div style="left:290.80px;top:563.00px;width:4.20px;height:1.00px;background:#c8ccd0;"></div>
<div style="left:295.30px;top:555.20px;width:18.00px;height:16.60px;background:#7cc9e4;"></div>
<div style="left:314.85px;top:555.20px;width:1.55px;height:16.60px;background:#6c2484;"></div>
<div style="left:316.00px;top:555.20px;width:45.00px;height:16.60px;background:#7cc9e4;"></div>
<div style="left:361.00px;top:563.00px;width:5.00px;height:1.00px;background:#c8ccd0;"></div>
<div style="left:368.55px;top:555.20px;width:1.55px;height:16.60px;background:#6c2484;"></div>
<div style="left:369.70px;top:555.20px;width:27.80px;height:16.60px;background:#7cc9e4;"></div>
<div style="left:397.50px;top:563.00px;width:9.20px;height:1.00px;background:#c8ccd0;"></div>
<div style="left:407.50px;top:555.20px;width:1.10px;height:16.60px;background:#6c2484;"></div>
<div style="left:414.50px;top:555.20px;width:18.30px;height:16.60px;background:#7cc9e4;"></div>
<div style="left:432.80px;top:563.00px;width:2.20px;height:1.00px;background:#c8ccd0;"></div>
<div style="left:437.65px;top:555.20px;width:1.55px;height:16.60px;background:#6c2484;"></div>
<div style="left:438.80px;top:555.20px;width:17.00px;height:16.60px;background:#7cc9e4;"></div>
<div style="left:455.80px;top:563.00px;width:2.20px;height:1.00px;background:#c8ccd0;"></div>
<div style="left:458.85px;top:555.20px;width:1.55px;height:16.60px;background:#6c2484;"></div>
<div style="left:460.00px;top:555.20px;width:17.80px;height:16.60px;background:#7cc9e4;"></div>
<div style="left:477.80px;top:563.00px;width:3.20px;height:1.00px;background:#c8ccd0;"></div>
<div style="left:481.65px;top:555.20px;width:1.55px;height:16.60px;background:#6c2484;"></div>
<div style="left:482.80px;top:555.20px;width:16.90px;height:16.60px;background:#7cc9e4;"></div>
<div style="left:499.70px;top:563.00px;width:3.30px;height:1.00px;background:#c8ccd0;"></div>
<div style="left:503.85px;top:555.20px;width:1.55px;height:16.60px;background:#6c2484;"></div>
<div style="left:505.00px;top:555.20px;width:18.00px;height:16.60px;background:#7cc9e4;"></div>
<div style="left:523.00px;top:563.00px;width:3.00px;height:1.00px;background:#c8ccd0;"></div>
<div style="left:526.65px;top:555.20px;width:1.55px;height:16.60px;background:#6c2484;"></div>
<div style="left:527.80px;top:555.20px;width:17.20px;height:16.60px;background:#7cc9e4;"></div>
<div style="left:545.00px;top:563.00px;width:3.00px;height:1.00px;background:#c8ccd0;"></div>
<div style="left:548.55px;top:555.20px;width:1.55px;height:16.60px;background:#6c2484;"></div>
<div style="left:549.70px;top:555.20px;width:16.50px;height:16.60px;background:#7cc9e4;"></div>
<div style="left:566.20px;top:563.00px;width:2.80px;height:1.00px;background:#c8ccd0;"></div>
<div style="left:569.35px;top:555.20px;width:1.55px;height:16.60px;background:#6c2484;"></div>
<div style="left:570.50px;top:555.20px;width:16.70px;height:16.60px;background:#7cc9e4;"></div>
<div style="left:587.20px;top:563.00px;width:3.80px;height:1.00px;background:#c8ccd0;"></div>
<div style="left:661.70px;top:555.20px;width:1.10px;height:16.60px;background:#6c2484;"></div>
<div style="left:668.30px;top:555.20px;width:56.40px;height:16.60px;background:#7cc9e4;"></div>
<div style="left:724.70px;top:563.00px;width:9.50px;height:1.00px;background:#c8ccd0;"></div>
<div style="left:744.65px;top:555.20px;width:1.55px;height:16.60px;background:#6c2484;"></div>
<div style="left:745.80px;top:555.20px;width:28.70px;height:16.60px;background:#7cc9e4;"></div>
<div style="left:774.50px;top:563.00px;width:3.50px;height:1.00px;background:#c8ccd0;"></div>
<div style="left:205.00px;top:573.80px;width:7.00px;height:16.70px;background:#7cc9e4;"></div>
<div style="left:216.70px;top:573.80px;width:17.10px;height:16.70px;background:#7cc9e4;"></div>
<div style="left:234.35px;top:573.80px;width:1.55px;height:16.70px;background:#6c2484;"></div>
<div style="left:235.50px;top:573.80px;width:18.70px;height:16.70px;background:#7cc9e4;"></div>
<div style="left:254.20px;top:581.65px;width:2.80px;height:1.00px;background:#c8ccd0;"></div>
<div style="left:258.55px;top:573.80px;width:1.55px;height:16.70px;background:#6c2484;"></div>
<div style="left:259.70px;top:573.80px;width:18.10px;height:16.70px;background:#7cc9e4;"></div>
<div style="left:277.80px;top:581.65px;width:4.20px;height:1.00px;background:#c8ccd0;"></div>
<div style="left:283.55px;top:573.80px;width:1.55px;height:16.70px;background:#6c2484;"></div>
<div style="left:284.70px;top:573.80px;width:18.10px;height:16.70px;background:#7cc9e4;"></div>
<div style="left:302.80px;top:581.65px;width:3.20px;height:1.00px;background:#c8ccd0;"></div>
<div style="left:316.20px;top:573.80px;width:1.10px;height:16.70px;background:#6c2484;"></div>
<div style="left:319.70px;top:573.80px;width:45.00px;height:16.70px;background:#7cc9e4;"></div>
<div style="left:364.70px;top:581.65px;width:9.30px;height:1.00px;background:#c8ccd0;"></div>
<div style="left:375.05px;top:573.80px;width:1.55px;height:16.70px;background:#6c2484;"></div>
<div style="left:376.20px;top:573.80px;width:30.80px;height:16.70px;background:#7cc9e4;"></div>
<div style="left:407.00px;top:581.65px;width:3.00px;height:1.00px;background:#c8ccd0;"></div>
<div style="left:410.70px;top:573.80px;width:1.10px;height:16.70px;background:#6c2484;"></div>
<div style="left:415.30px;top:573.80px;width:18.00px;height:16.70px;background:#7cc9e4;"></div>
<div style="left:433.30px;top:581.65px;width:3.70px;height:1.00px;background:#c8ccd0;"></div>
<div style="left:439.35px;top:573.80px;width:1.55px;height:16.70px;background:#6c2484;"></div>
<div style="left:440.50px;top:573.80px;width:17.00px;height:16.70px;background:#7cc9e4;"></div>
<div style="left:457.50px;top:581.65px;width:2.50px;height:1.00px;background:#c8ccd0;"></div>
<div style="left:460.15px;top:573.80px;width:1.55px;height:16.70px;background:#6c2484;"></div>
<div style="left:461.30px;top:573.80px;width:17.00px;height:16.70px;background:#7cc9e4;"></div>
<div style="left:478.30px;top:581.65px;width:3.70px;height:1.00px;background:#c8ccd0;"></div>
<div style="left:482.65px;top:573.80px;width:1.55px;height:16.70px;background:#6c2484;"></div>
<div style="left:483.80px;top:573.80px;width:17.90px;height:16.70px;background:#7cc9e4;"></div>
<div style="left:501.70px;top:581.65px;width:3.30px;height:1.00px;background:#c8ccd0;"></div>
<div style="left:505.05px;top:573.80px;width:1.55px;height:16.70px;background:#6c2484;"></div>
<div style="left:506.20px;top:573.80px;width:18.00px;height:16.70px;background:#7cc9e4;"></div>
<div style="left:524.20px;top:581.65px;width:2.80px;height:1.00px;background:#c8ccd0;"></div>
<div style="left:527.65px;top:573.80px;width:1.55px;height:16.70px;background:#6c2484;"></div>
<div style="left:528.80px;top:573.80px;width:17.90px;height:16.70px;background:#7cc9e4;"></div>
<div style="left:546.70px;top:581.65px;width:3.30px;height:1.00px;background:#c8ccd0;"></div>
<div style="left:550.05px;top:573.80px;width:1.55px;height:16.70px;background:#6c2484;"></div>
<div style="left:551.20px;top:573.80px;width:17.10px;height:16.70px;background:#7cc9e4;"></div>
<div style="left:568.30px;top:581.65px;width:2.70px;height:1.00px;background:#c8ccd0;"></div>
<div style="left:571.65px;top:573.80px;width:1.55px;height:16.70px;background:#6c2484;"></div>
<div style="left:572.80px;top:573.80px;width:17.20px;height:16.70px;background:#7cc9e4;"></div>
<div style="left:590.00px;top:581.65px;width:3.00px;height:1.00px;background:#c8ccd0;"></div>
<div style="left:749.65px;top:573.80px;width:1.55px;height:16.70px;background:#6c2484;"></div>
<div style="left:750.80px;top:573.80px;width:26.40px;height:16.70px;background:#7cc9e4;"></div>
<div style="left:777.20px;top:581.65px;width:4.80px;height:1.00px;background:#c8ccd0;"></div>
<div style="left:205.00px;top:592.30px;width:16.30px;height:17.00px;background:#7cc9e4;"></div>
<div style="left:221.30px;top:600.30px;width:7.70px;height:1.00px;background:#c8ccd0;"></div>
<div style="left:232.65px;top:592.30px;width:1.55px;height:17.00px;background:#6c2484;"></div>
<div style="left:233.80px;top:592.30px;width:16.50px;height:17.00px;background:#7cc9e4;"></div>
<div style="left:250.30px;top:600.30px;width:3.70px;height:1.00px;background:#c8ccd0;"></div>
<div style="left:255.00px;top:592.30px;width:18.80px;height:17.00px;background:#7cc9e4;"></div>
<div style="left:274.65px;top:592.30px;width:1.55px;height:17.00px;background:#6c2484;"></div>
<div style="left:275.80px;top:592.30px;width:17.00px;height:17.00px;background:#7cc9e4;"></div>
<div style="left:292.80px;top:600.30px;width:3.20px;height:1.00px;background:#c8ccd0;"></div>
<div style="left:317.00px;top:592.30px;width:1.10px;height:17.00px;background:#6c2484;"></div>
<div style="left:323.00px;top:592.30px;width:63.20px;height:17.00px;background:#7cc9e4;"></div>
<div style="left:386.20px;top:600.30px;width:4.80px;height:1.00px;background:#c8ccd0;"></div>
<div style="left:392.00px;top:592.30px;width:1.10px;height:17.00px;background:#6c2484;"></div>
<div style="left:394.70px;top:592.30px;width:19.50px;height:17.00px;background:#7cc9e4;"></div>
<div style="left:414.20px;top:600.30px;width:3.80px;height:1.00px;background:#c8ccd0;"></div>
<div style="left:418.85px;top:592.30px;width:1.55px;height:17.00px;background:#6c2484;"></div>
<div style="left:420.00px;top:592.30px;width:18.80px;height:17.00px;background:#7cc9e4;"></div>
<div style="left:438.80px;top:600.30px;width:2.20px;height:1.00px;background:#c8ccd0;"></div>
<div style="left:442.65px;top:592.30px;width:1.55px;height:17.00px;background:#6c2484;"></div>
<div style="left:443.80px;top:592.30px;width:16.70px;height:17.00px;background:#7cc9e4;"></div>
<div style="left:460.50px;top:600.30px;width:2.50px;height:1.00px;background:#c8ccd0;"></div>
<div style="left:463.85px;top:592.30px;width:1.55px;height:17.00px;background:#6c2484;"></div>
<div style="left:465.00px;top:592.30px;width:22.50px;height:17.00px;background:#7cc9e4;"></div>
<div style="left:487.50px;top:600.30px;width:2.50px;height:1.00px;background:#c8ccd0;"></div>
<div style="left:491.85px;top:592.30px;width:1.55px;height:17.00px;background:#6c2484;"></div>
<div style="left:493.00px;top:592.30px;width:17.00px;height:17.00px;background:#7cc9e4;"></div>
<div style="left:510.00px;top:600.30px;width:3.00px;height:1.00px;background:#c8ccd0;"></div>
<div style="left:513.55px;top:592.30px;width:1.55px;height:17.00px;background:#6c2484;"></div>
<div style="left:514.70px;top:592.30px;width:17.30px;height:17.00px;background:#7cc9e4;"></div>
<div style="left:532.00px;top:600.30px;width:3.00px;height:1.00px;background:#c8ccd0;"></div>
<div style="left:535.05px;top:592.30px;width:1.55px;height:17.00px;background:#6c2484;"></div>
<div style="left:536.20px;top:592.30px;width:16.80px;height:17.00px;background:#7cc9e4;"></div>
<div style="left:553.00px;top:600.30px;width:4.00px;height:1.00px;background:#c8ccd0;"></div>
<div style="left:558.85px;top:592.30px;width:1.55px;height:17.00px;background:#6c2484;"></div>
<div style="left:560.00px;top:592.30px;width:17.80px;height:17.00px;background:#7cc9e4;"></div>
<div style="left:577.80px;top:600.30px;width:3.20px;height:1.00px;background:#c8ccd0;"></div>
<div style="left:581.35px;top:592.30px;width:1.55px;height:17.00px;background:#6c2484;"></div>
<div style="left:582.50px;top:592.30px;width:16.70px;height:17.00px;background:#7cc9e4;"></div>
<div style="left:599.20px;top:600.30px;width:2.80px;height:1.00px;background:#c8ccd0;"></div>
<div style="left:750.55px;top:592.30px;width:1.55px;height:17.00px;background:#6c2484;"></div>
<div style="left:751.70px;top:592.30px;width:25.50px;height:17.00px;background:#7cc9e4;"></div>
<div style="left:777.20px;top:600.30px;width:4.80px;height:1.00px;background:#c8ccd0;"></div>
<div style="left:205.00px;top:611.00px;width:10.80px;height:17.00px;background:#7cc9e4;"></div>
<div style="left:220.00px;top:611.00px;width:15.80px;height:17.00px;background:#7cc9e4;"></div>
<div style="left:237.15px;top:611.00px;width:1.55px;height:17.00px;background:#6c2484;"></div>
<div style="left:238.30px;top:611.00px;width:17.50px;height:17.00px;background:#7cc9e4;"></div>
<div style="left:255.80px;top:619.00px;width:3.20px;height:1.00px;background:#c8ccd0;"></div>
<div style="left:259.35px;top:611.00px;width:1.55px;height:17.00px;background:#6c2484;"></div>
<div style="left:260.50px;top:611.00px;width:18.20px;height:17.00px;background:#7cc9e4;"></div>
<div style="left:278.70px;top:619.00px;width:4.30px;height:1.00px;background:#c8ccd0;"></div>
<div style="left:285.05px;top:611.00px;width:1.55px;height:17.00px;background:#6c2484;"></div>
<div style="left:286.20px;top:611.00px;width:16.80px;height:17.00px;background:#7cc9e4;"></div>
<div style="left:303.00px;top:619.00px;width:4.00px;height:1.00px;background:#c8ccd0;"></div>
<div style="left:307.50px;top:611.00px;width:20.50px;height:17.00px;background:#7cc9e4;"></div>
<div style="left:335.50px;top:611.00px;width:59.20px;height:17.00px;background:#7cc9e4;"></div>
<div style="left:394.70px;top:619.00px;width:5.30px;height:1.00px;background:#c8ccd0;"></div>
<div style="left:401.20px;top:611.00px;width:1.10px;height:17.00px;background:#6c2484;"></div>
<div style="left:412.50px;top:611.00px;width:17.00px;height:17.00px;background:#7cc9e4;"></div>
<div style="left:429.50px;top:619.00px;width:3.50px;height:1.00px;background:#c8ccd0;"></div>
<div style="left:433.05px;top:611.00px;width:1.55px;height:17.00px;background:#6c2484;"></div>
<div style="left:434.20px;top:611.00px;width:16.60px;height:17.00px;background:#7cc9e4;"></div>
<div style="left:450.80px;top:619.00px;width:3.20px;height:1.00px;background:#c8ccd0;"></div>
<div style="left:454.35px;top:611.00px;width:1.55px;height:17.00px;background:#6c2484;"></div>
<div style="left:455.50px;top:611.00px;width:17.00px;height:17.00px;background:#7cc9e4;"></div>
<div style="left:472.50px;top:619.00px;width:3.50px;height:1.00px;background:#c8ccd0;"></div>
<div style="left:476.05px;top:611.00px;width:1.55px;height:17.00px;background:#6c2484;"></div>
<div style="left:477.20px;top:611.00px;width:17.80px;height:17.00px;background:#7cc9e4;"></div>
<div style="left:495.00px;top:619.00px;width:3.00px;height:1.00px;background:#c8ccd0;"></div>
<div style="left:498.85px;top:611.00px;width:1.55px;height:17.00px;background:#6c2484;"></div>
<div style="left:500.00px;top:611.00px;width:16.70px;height:17.00px;background:#7cc9e4;"></div>
<div style="left:516.70px;top:619.00px;width:3.30px;height:1.00px;background:#c8ccd0;"></div>
<div style="left:520.05px;top:611.00px;width:1.55px;height:17.00px;background:#6c2484;"></div>
<div style="left:521.20px;top:611.00px;width:17.10px;height:17.00px;background:#7cc9e4;"></div>
<div style="left:538.30px;top:619.00px;width:2.70px;height:1.00px;background:#c8ccd0;"></div>
<div style="left:541.05px;top:611.00px;width:1.55px;height:17.00px;background:#6c2484;"></div>
<div style="left:542.20px;top:611.00px;width:17.00px;height:17.00px;background:#7cc9e4;"></div>
<div style="left:559.20px;top:619.00px;width:2.80px;height:1.00px;background:#c8ccd0;"></div>
<div style="left:562.15px;top:611.00px;width:1.55px;height:17.00px;background:#6c2484;"></div>
<div style="left:563.30px;top:611.00px;width:17.50px;height:17.00px;background:#7cc9e4;"></div>
<div style="left:580.80px;top:619.00px;width:3.20px;height:1.00px;background:#c8ccd0;"></div>
<div style="left:585.05px;top:611.00px;width:1.55px;height:17.00px;background:#6c2484;"></div>
<div style="left:586.20px;top:611.00px;width:16.60px;height:17.00px;background:#7cc9e4;"></div>
<div style="left:602.80px;top:619.00px;width:3.20px;height:1.00px;background:#c8ccd0;"></div>
<div style="left:751.35px;top:611.00px;width:1.55px;height:17.00px;background:#6c2484;"></div>
<div style="left:752.50px;top:611.00px;width:24.70px;height:17.00px;background:#7cc9e4;"></div>
<div style="left:777.20px;top:619.00px;width:8.80px;height:1.00px;background:#c8ccd0;"></div>
<div style="left:205.00px;top:629.80px;width:12.50px;height:17.00px;background:#7cc9e4;"></div>
<div style="left:217.50px;top:637.80px;width:11.50px;height:1.00px;background:#c8ccd0;"></div>
<div style="left:233.35px;top:629.80px;width:1.55px;height:17.00px;background:#6c2484;"></div>
<div style="left:234.50px;top:629.80px;width:18.00px;height:17.00px;background:#7cc9e4;"></div>
<div style="left:252.50px;top:637.80px;width:2.50px;height:1.00px;background:#c8ccd0;"></div>
<div style="left:256.05px;top:629.80px;width:1.55px;height:17.00px;background:#6c2484;"></div>
<div style="left:257.20px;top:629.80px;width:17.80px;height:17.00px;background:#7cc9e4;"></div>
<div style="left:275.00px;top:637.80px;width:2.00px;height:1.00px;background:#c8ccd0;"></div>
<div style="left:278.55px;top:629.80px;width:1.55px;height:17.00px;background:#6c2484;"></div>
<div style="left:279.70px;top:629.80px;width:18.60px;height:17.00px;background:#7cc9e4;"></div>
<div style="left:298.30px;top:637.80px;width:3.70px;height:1.00px;background:#c8ccd0;"></div>
<div style="left:335.85px;top:629.80px;width:1.55px;height:17.00px;background:#6c2484;"></div>
<div style="left:337.00px;top:629.80px;width:56.30px;height:17.00px;background:#7cc9e4;"></div>
<div style="left:393.30px;top:637.80px;width:6.70px;height:1.00px;background:#c8ccd0;"></div>
<div style="left:402.00px;top:629.80px;width:1.10px;height:17.00px;background:#6c2484;"></div>
<div style="left:412.50px;top:629.80px;width:17.00px;height:17.00px;background:#7cc9e4;"></div>
<div style="left:429.50px;top:637.80px;width:3.50px;height:1.00px;background:#c8ccd0;"></div>
<div style="left:434.15px;top:629.80px;width:1.55px;height:17.00px;background:#6c2484;"></div>
<div style="left:435.30px;top:629.80px;width:17.50px;height:17.00px;background:#7cc9e4;"></div>
<div style="left:452.80px;top:637.80px;width:2.20px;height:1.00px;background:#c8ccd0;"></div>
<div style="left:455.85px;top:629.80px;width:1.55px;height:17.00px;background:#6c2484;"></div>
<div style="left:457.00px;top:629.80px;width:16.70px;height:17.00px;background:#7cc9e4;"></div>
<div style="left:473.70px;top:637.80px;width:3.30px;height:1.00px;background:#c8ccd0;"></div>
<div style="left:476.85px;top:629.80px;width:1.55px;height:17.00px;background:#6c2484;"></div>
<div style="left:478.00px;top:629.80px;width:17.00px;height:17.00px;background:#7cc9e4;"></div>
<div style="left:495.00px;top:637.80px;width:3.00px;height:1.00px;background:#c8ccd0;"></div>
<div style="left:499.35px;top:629.80px;width:1.55px;height:17.00px;background:#6c2484;"></div>
<div style="left:500.50px;top:629.80px;width:17.00px;height:17.00px;background:#7cc9e4;"></div>
<div style="left:517.50px;top:637.80px;width:3.50px;height:1.00px;background:#c8ccd0;"></div>
<div style="left:521.05px;top:629.80px;width:1.55px;height:17.00px;background:#6c2484;"></div>
<div style="left:522.20px;top:629.80px;width:17.30px;height:17.00px;background:#7cc9e4;"></div>
<div style="left:539.50px;top:637.80px;width:3.50px;height:1.00px;background:#c8ccd0;"></div>
<div style="left:541.65px;top:629.80px;width:1.55px;height:17.00px;background:#6c2484;"></div>
<div style="left:542.80px;top:629.80px;width:17.20px;height:17.00px;background:#7cc9e4;"></div>
<div style="left:560.00px;top:637.80px;width:3.00px;height:1.00px;background:#c8ccd0;"></div>
<div style="left:563.05px;top:629.80px;width:1.55px;height:17.00px;background:#6c2484;"></div>
<div style="left:564.20px;top:629.80px;width:17.50px;height:17.00px;background:#7cc9e4;"></div>
<div style="left:581.70px;top:637.80px;width:3.30px;height:1.00px;background:#c8ccd0;"></div>
<div style="left:586.65px;top:629.80px;width:1.55px;height:17.00px;background:#6c2484;"></div>
<div style="left:587.80px;top:629.80px;width:17.20px;height:17.00px;background:#7cc9e4;"></div>
<div style="left:605.00px;top:637.80px;width:3.00px;height:1.00px;background:#c8ccd0;"></div>
<div style="left:752.15px;top:629.80px;width:1.55px;height:17.00px;background:#6c2484;"></div>
<div style="left:753.30px;top:629.80px;width:25.00px;height:17.00px;background:#7cc9e4;"></div>
<div style="left:778.30px;top:637.80px;width:6.20px;height:1.00px;background:#c8ccd0;"></div>
<div style="left:784.60px;top:629.80px;width:9.40px;height:17.00px;background:#7cc9e4;"></div>
<div style="left:205.00px;top:648.60px;width:14.00px;height:1.60px;background:#7cc9e4;"></div>
<div style="left:236.00px;top:648.60px;width:17.00px;height:1.60px;background:#7cc9e4;"></div>
<div style="left:262.00px;top:648.60px;width:16.00px;height:1.60px;background:#7cc9e4;"></div>
<div style="left:287.00px;top:648.60px;width:16.00px;height:1.60px;background:#7cc9e4;"></div>
<div style="left:337.00px;top:648.60px;width:57.00px;height:1.60px;background:#7cc9e4;"></div>
<div style="left:413.00px;top:648.60px;width:17.00px;height:1.60px;background:#7cc9e4;"></div>
<div style="left:438.00px;top:648.60px;width:17.00px;height:1.60px;background:#7cc9e4;"></div>
<div style="left:461.00px;top:648.60px;width:17.00px;height:1.60px;background:#7cc9e4;"></div>
<div style="left:484.00px;top:648.60px;width:16.00px;height:1.60px;background:#7cc9e4;"></div>
<div style="left:507.00px;top:648.60px;width:17.00px;height:1.60px;background:#7cc9e4;"></div>
<div style="left:529.00px;top:648.60px;width:16.00px;height:1.60px;background:#7cc9e4;"></div>
<div style="left:552.00px;top:648.60px;width:16.00px;height:1.60px;background:#7cc9e4;"></div>
<div style="left:574.00px;top:648.60px;width:16.00px;height:1.60px;background:#7cc9e4;"></div>
<div style="left:204.90px;top:650.20px;width:589.20px;height:11.80px;background:#2d2d2d;"></div>
<div style="left:717.20px;top:650.20px;width:12.30px;height:11.80px;background:#4a4a4a;"></div>
<div style="left:794.20px;top:367.00px;width:11.80px;height:283.20px;background:#2d2d2d;"></div>
<div style="left:794.20px;top:380.00px;width:11.80px;height:23.70px;background:#474747;"></div>
<div style="left:751.90px;top:142.70px;width:1.00px;height:224.10px;background:rgba(170,170,170,.8);"></div>
<div style="left:751.90px;top:366.80px;width:1.00px;height:93.20px;background:rgba(120,150,140,.18);"></div>
<div style="left:751.90px;top:460.00px;width:1.00px;height:19.50px;background:rgba(170,170,170,.6);"></div>
<div style="left:751.90px;top:479.50px;width:1.00px;height:170.50px;background:rgba(150,150,150,.12);"></div>
<div style="left:818.50px;top:191.50px;width:11.00px;height:407.00px;background:#424242;"></div>
<div style="left:830.60px;top:121.20px;width:350.60px;height:553.40px;background:#2c2c2c;border:1.3px solid #c6c6c6;box-sizing:border-box;"></div>
<div style="left:1168.20px;top:122.50px;width:11.60px;height:551.50px;background:#2a2a2a;"></div>
<div style="left:1168.20px;top:133.50px;width:11.60px;height:356.10px;background:#444444;"></div>
<div style="left:840.10px;top:436.00px;width:219.80px;height:13.60px;background:#8012f2;"></div>
<div style="left:1059.90px;top:436.00px;width:14.10px;height:13.60px;background:#2162c0;"></div>
<div style="left:839.80px;top:458.30px;width:16.20px;height:15.70px;background:#d8262e;background-image:radial-gradient(#ee6e3a 0.4px,transparent 0.75px);background-size:2.2px 2.2px;box-shadow:inset 0 0 0 1.6px #d8262e;"></div>
<div style="left:840.10px;top:474.30px;width:15.90px;height:15.90px;background:#8012f2;"></div>
<div style="left:840.10px;top:490.20px;width:15.90px;height:16.00px;background:#2162c0;"></div>
<div style="left:840.10px;top:506.20px;width:15.90px;height:15.90px;background:#f0b215;"></div>
<div style="left:840.20px;top:569.80px;width:219.80px;height:7.40px;background:#8012f2;"></div>
<div style="left:840.20px;top:607.40px;width:328.80px;height:12.60px;background:#303030;"></div>
<div style="left:902.00px;top:607.40px;width:1.00px;height:12.60px;background:#444;"></div>
<div style="left:840.20px;top:643.10px;width:328.80px;height:22.10px;background:#202022;"></div>
</div>
<div class="t">
<span style="left:16.00px;top:4.05px;font-size:9.0px;color:#8c8c8c;transform:scaleX(0.9190);">FpsMicrogame-20250127-130057.rgp - Vulkan - Radeon GPU Profiler - V2.3.0.20</span>
<span style="left:9.50px;top:19.25px;font-size:9.2px;color:#e0e0e0;transform:scaleX(0.8900);">File</span>
<span style="left:35.50px;top:19.25px;font-size:9.2px;color:#e0e0e0;transform:scaleX(0.8900);">Help</span>
<span style="left:129.00px;top:46.53px;font-size:10.6px;color:#7c7c7c;font-weight:700;transform:scaleX(0.8977);">START</span>
<span style="left:194.00px;top:46.53px;font-size:10.6px;color:#7c7c7c;font-weight:700;transform:scaleX(0.9314);">OVERVIEW</span>
<span style="left:281.50px;top:46.53px;font-size:10.6px;color:#ffffff;font-weight:700;transform:scaleX(0.8964);">EVENTS</span>
<span style="left:1134.90px;top:46.53px;font-size:10.6px;color:#8a8a8a;font-weight:700;transform:scaleX(0.8984);">SETTINGS</span>
<span style="left:30.00px;top:94.24px;font-size:9.6px;color:#ffffff;font-weight:700;transform:scaleX(0.9613);">Wavefront occupancy</span>
<span style="left:187.00px;top:94.24px;font-size:9.6px;color:#ffffff;font-weight:700;transform:scaleX(0.9639);">Event timing</span>
<span style="left:304.00px;top:94.24px;font-size:9.6px;color:#ffffff;font-weight:700;transform:scaleX(0.9699);">Pipeline state</span>
<span style="left:424.00px;top:94.24px;font-size:9.6px;color:#808080;font-weight:700;transform:scaleX(0.9936);">Instruction timing</span>
<span style="left:69.30px;top:126.14px;font-size:9.4px;color:#d8d8d8;transform:scaleX(0.9459);">Views</span>
<span style="left:46.20px;top:181.54px;font-size:9.6px;color:#ffffff;font-weight:700;transform:scaleX(0.9573);">Wavefront occupancy</span>
<span style="left:66.70px;top:201.14px;font-size:9.4px;color:#d8d8d8;transform:scaleX(0.9741);">Color by API shader stage</span>
<span style="left:66.70px;top:223.54px;font-size:9.4px;color:#d8d8d8;transform:scaleX(0.9606);">RDNA shader stages</span>
<span style="left:67.60px;top:246.04px;font-size:9.4px;color:#d8d8d8;transform:scaleX(0.8900);">VS</span>
<span style="left:67.60px;top:267.74px;font-size:9.4px;color:#d8d8d8;transform:scaleX(0.8782);">TCS &amp; TES</span>
<span style="left:67.60px;top:289.44px;font-size:9.4px;color:#d8d8d8;transform:scaleX(0.8900);">GS</span>
<span style="left:67.60px;top:310.84px;font-size:9.4px;color:#d8d8d8;transform:scaleX(0.8900);">FS</span>
<span style="left:67.60px;top:332.34px;font-size:9.4px;color:#d8d8d8;transform:scaleX(0.8900);">CS</span>
<span style="left:135.00px;top:246.14px;font-size:9.4px;color:#d8d8d8;transform:scaleX(0.8900);">RT</span>
<span style="left:46.00px;top:369.04px;font-size:9.6px;color:#ffffff;font-weight:700;transform:scaleX(0.9685);">Event timeline</span>
<span style="left:66.40px;top:388.94px;font-size:9.4px;color:#d8d8d8;">Color by queue</span>
<span style="left:66.40px;top:410.94px;font-size:9.4px;color:#d8d8d8;transform:scaleX(0.9843);">Event filter</span>
<span style="left:66.40px;top:433.74px;font-size:9.4px;color:#d8d8d8;transform:scaleX(0.9687);">Overlay</span>
<span style="left:48.70px;top:472.44px;font-size:9.4px;color:#c0c0c0;transform:scaleX(0.9393);">Filter events...</span>
<span style="left:67.50px;top:494.44px;font-size:9.4px;color:#d8d8d8;transform:scaleX(0.9453);">CP marker</span>
<span style="left:67.50px;top:516.04px;font-size:9.4px;color:#d8d8d8;transform:scaleX(0.9667);">Graphics queue</span>
<span style="left:67.50px;top:537.34px;font-size:9.4px;color:#d8d8d8;">Compute queue</span>
<span style="left:67.50px;top:558.64px;font-size:9.4px;color:#d8d8d8;transform:scaleX(1.0098);">Application barrier</span>
<span style="left:67.50px;top:580.24px;font-size:9.4px;color:#d8d8d8;transform:scaleX(0.9926);">Driver barrier</span>
<span style="left:67.50px;top:602.24px;font-size:9.4px;color:#d8d8d8;transform:scaleX(1.0215);">Application layout transition</span>
<span style="left:67.50px;top:623.54px;font-size:9.4px;color:#d8d8d8;transform:scaleX(1.0111);">Driver layout transition</span>
<span style="left:321.00px;top:146.53px;font-size:7.5px;color:#d4d4d4;transform:scaleX(0.9496);">10,100.000 µs</span>
<span style="left:488.70px;top:146.53px;font-size:7.5px;color:#d4d4d4;transform:scaleX(0.9496);">10,125.000 µs</span>
<span style="left:655.00px;top:146.53px;font-size:7.5px;color:#d4d4d4;transform:scaleX(0.9475);">10,150.000 µs</span>
<span style="left:795.70px;top:186.60px;font-size:9.3px;color:#d8d8d8;transform:scaleX(0.8900);">100%</span>
<span style="left:795.70px;top:207.40px;font-size:9.3px;color:#d8d8d8;transform:scaleX(0.8900);">75%</span>
<span style="left:795.70px;top:227.70px;font-size:9.3px;color:#d8d8d8;transform:scaleX(0.8900);">50%</span>
<span style="left:795.70px;top:248.60px;font-size:9.3px;color:#d8d8d8;transform:scaleX(0.8900);">25%</span>
<span style="left:795.70px;top:269.00px;font-size:9.3px;color:#d8d8d8;transform:scaleX(0.8900);">0%</span>
<span style="left:795.70px;top:290.10px;font-size:9.3px;color:#d8d8d8;transform:scaleX(0.8900);">25%</span>
<span style="left:795.70px;top:310.60px;font-size:9.3px;color:#d8d8d8;transform:scaleX(0.8900);">50%</span>
<span style="left:795.70px;top:331.00px;font-size:9.3px;color:#d8d8d8;transform:scaleX(0.8900);">75%</span>
<span style="left:795.70px;top:351.70px;font-size:9.3px;color:#d8d8d8;transform:scaleX(0.8900);">100%</span>
<span style="left:205.60px;top:368.96px;font-size:8.6px;color:#1c3a24;transform:scaleX(0.9344);">MeshSkinning.SkinOnGPU</span>
<span style="left:205.60px;top:387.86px;font-size:8.6px;color:#1c3a24;transform:scaleX(0.9462);">UniversalRenderPipeline.RenderSingleCameraInternal: Main Camera</span>
<span style="left:205.60px;top:406.66px;font-size:8.6px;color:#1c3a24;transform:scaleX(0.9131);">ExecuteRenderGraph</span>
<span style="left:205.60px;top:425.26px;font-size:8.6px;color:#f4c6d6;transform:scaleX(0.9564);">DrawOpaqueObjects</span>
<div class="c" style="left:205.00px;top:443.96px;width:97.70px;height:10.6px"><span style="left:0.60px;top:0;font-size:8.6px;color:#dfe4ff;transform:scaleX(0.9177);">RenderLoop.DrawSRPBatcher</span></div>
<span style="left:399.00px;top:443.96px;font-size:8.6px;color:#dfe4ff;transform:scaleX(0.9177);">RenderLoop.DrawSRPBatcher</span>
<div class="c" style="left:727.00px;top:425.26px;width:67.10px;height:10.6px"><span style="left:0.70px;top:0;font-size:8.6px;color:#1c5a34;transform:scaleX(0.9695);">DrawTransparentObjects</span></div>
<span style="left:734.40px;top:443.96px;font-size:8.6px;color:#dfe4ff;transform:scaleX(0.8900);">R</span>
<div class="c" style="left:768.00px;top:443.96px;width:26.10px;height:10.6px"><span style="left:0.90px;top:0;font-size:8.6px;color:#dfe4ff;transform:scaleX(0.9110);">RenderLoop</span></div>
<span style="left:205.30px;top:482.16px;font-size:8.6px;color:#14303e;transform:scaleX(0.8900);">3013</span>
<span style="left:237.30px;top:482.16px;font-size:8.6px;color:#14303e;transform:scaleX(0.8900);">3052</span>
<span style="left:259.00px;top:482.16px;font-size:8.6px;color:#14303e;transform:scaleX(0.8900);">3073</span>
<span style="left:283.10px;top:482.16px;font-size:8.6px;color:#14303e;transform:scaleX(0.8900);">3097</span>
<span style="left:334.10px;top:482.16px;font-size:8.6px;color:#14303e;transform:scaleX(0.8900);">3115</span>
<span style="left:410.00px;top:482.16px;font-size:8.6px;color:#14303e;transform:scaleX(0.8900);">3180</span>
<span style="left:431.50px;top:482.16px;font-size:8.6px;color:#14303e;transform:scaleX(0.8900);">3210</span>
<span style="left:453.60px;top:482.16px;font-size:8.6px;color:#14303e;transform:scaleX(0.8900);">3231</span>
<span style="left:474.80px;top:482.16px;font-size:8.6px;color:#14303e;transform:scaleX(0.8900);">3252</span>
<span style="left:495.80px;top:482.16px;font-size:8.6px;color:#14303e;transform:scaleX(0.8900);">3273</span>
<span style="left:517.50px;top:482.16px;font-size:8.6px;color:#14303e;transform:scaleX(0.8900);">3294</span>
<span style="left:539.80px;top:482.16px;font-size:8.6px;color:#14303e;transform:scaleX(0.8900);">3316</span>
<span style="left:562.00px;top:482.16px;font-size:8.6px;color:#14303e;transform:scaleX(0.8900);">3338</span>
<span style="left:583.80px;top:482.16px;font-size:8.6px;color:#14303e;transform:scaleX(0.8900);">3359</span>
<span style="left:611.50px;top:481.96px;font-size:8.6px;color:#14303e;transform:scaleX(0.8900);">3368</span>
<span style="left:736.50px;top:482.16px;font-size:8.6px;color:#14303e;transform:scaleX(0.8900);">3373</span>
<span style="left:207.50px;top:500.76px;font-size:8.6px;color:#14303e;transform:scaleX(0.8900);">3022</span>
<span style="left:231.60px;top:500.76px;font-size:8.6px;color:#14303e;transform:scaleX(0.8900);">3046</span>
<span style="left:255.30px;top:500.76px;font-size:8.6px;color:#14303e;transform:scaleX(0.8900);">3069</span>
<span style="left:278.10px;top:500.76px;font-size:8.6px;color:#14303e;transform:scaleX(0.8900);">3091</span>
<span style="left:303.10px;top:500.76px;font-size:8.6px;color:#14303e;transform:scaleX(0.8900);">3109</span>
<span style="left:355.30px;top:500.76px;font-size:8.6px;color:#14303e;transform:scaleX(0.8900);">3135</span>
<span style="left:413.60px;top:500.76px;font-size:8.6px;color:#14303e;transform:scaleX(0.8900);">3186</span>
<span style="left:436.50px;top:500.76px;font-size:8.6px;color:#14303e;transform:scaleX(0.8900);">3215</span>
<span style="left:458.30px;top:500.76px;font-size:8.6px;color:#14303e;transform:scaleX(0.8900);">3236</span>
<span style="left:479.80px;top:500.76px;font-size:8.6px;color:#14303e;transform:scaleX(0.8900);">3257</span>
<span style="left:502.00px;top:500.76px;font-size:8.6px;color:#14303e;transform:scaleX(0.8900);">3279</span>
<span style="left:523.60px;top:500.76px;font-size:8.6px;color:#14303e;transform:scaleX(0.8900);">3300</span>
<span style="left:544.80px;top:500.76px;font-size:8.6px;color:#14303e;transform:scaleX(0.8900);">3321</span>
<span style="left:565.60px;top:500.76px;font-size:8.6px;color:#14303e;transform:scaleX(0.8900);">3342</span>
<span style="left:587.30px;top:500.76px;font-size:8.6px;color:#14303e;transform:scaleX(0.8900);">3363</span>
<span style="left:636.10px;top:500.76px;font-size:8.6px;color:#14303e;transform:scaleX(0.8900);">3369</span>
<span style="left:738.60px;top:500.76px;font-size:8.6px;color:#14303e;transform:scaleX(0.8900);">3374</span>
<div class="c" style="left:205.00px;top:519.66px;width:8.00px;height:10.6px"><span style="left:0.30px;top:0;font-size:8.6px;color:#c4dfec;transform:scaleX(0.8900);">3010</span></div>
<div class="c" style="left:213.00px;top:519.66px;width:14.00px;height:10.6px"><span style="left:-7.70px;top:0;font-size:8.6px;color:#0a0a0c;transform:scaleX(0.8900);text-shadow:0 0 1px #d0d0d0,0 0 1px #d0d0d0,0 0 1.5px #d0d0d0;">3010</span></div>
<span style="left:230.50px;top:519.66px;font-size:8.6px;color:#14303e;transform:scaleX(0.8900);">3044</span>
<span style="left:252.30px;top:519.66px;font-size:8.6px;color:#14303e;transform:scaleX(0.8900);">3066</span>
<span style="left:276.80px;top:519.66px;font-size:8.6px;color:#14303e;transform:scaleX(0.8900);">3090</span>
<span style="left:310.60px;top:519.66px;font-size:8.6px;color:#14303e;transform:scaleX(0.8900);">3110</span>
<span style="left:356.50px;top:519.66px;font-size:8.6px;color:#14303e;transform:scaleX(0.8900);">3136</span>
<span style="left:414.80px;top:519.66px;font-size:8.6px;color:#14303e;transform:scaleX(0.8900);">3187</span>
<span style="left:437.30px;top:519.66px;font-size:8.6px;color:#14303e;transform:scaleX(0.8900);">3216</span>
<span style="left:459.80px;top:519.66px;font-size:8.6px;color:#14303e;transform:scaleX(0.8900);">3238</span>
<span style="left:482.30px;top:519.66px;font-size:8.6px;color:#14303e;transform:scaleX(0.8900);">3260</span>
<span style="left:504.80px;top:519.66px;font-size:8.6px;color:#14303e;transform:scaleX(0.8900);">3282</span>
<span style="left:526.50px;top:519.66px;font-size:8.6px;color:#14303e;transform:scaleX(0.8900);">3303</span>
<span style="left:548.60px;top:519.66px;font-size:8.6px;color:#14303e;transform:scaleX(0.8900);">3325</span>
<span style="left:570.30px;top:519.66px;font-size:8.6px;color:#14303e;transform:scaleX(0.8900);">3346</span>
<span style="left:597.50px;top:519.66px;font-size:8.6px;color:#14303e;transform:scaleX(0.8900);">3367</span>
<span style="left:641.60px;top:519.66px;font-size:8.6px;color:#14303e;transform:scaleX(0.8900);">3370</span>
<span style="left:739.50px;top:519.66px;font-size:8.6px;color:#14303e;transform:scaleX(0.8900);">3375</span>
<div class="c" style="left:205.00px;top:538.26px;width:8.00px;height:10.6px"><span style="left:0.30px;top:0;font-size:8.6px;color:#c4dfec;transform:scaleX(0.8900);">3011</span></div>
<div class="c" style="left:213.00px;top:538.26px;width:14.00px;height:10.6px"><span style="left:-7.70px;top:0;font-size:8.6px;color:#0a0a0c;transform:scaleX(0.8900);text-shadow:0 0 1px #d0d0d0,0 0 1px #d0d0d0,0 0 1.5px #d0d0d0;">3011</span></div>
<span style="left:230.80px;top:538.26px;font-size:8.6px;color:#14303e;transform:scaleX(0.8900);">3045</span>
<span style="left:271.50px;top:538.26px;font-size:8.6px;color:#14303e;transform:scaleX(0.8900);">3085</span>
<span style="left:295.00px;top:538.26px;font-size:8.6px;color:#14303e;transform:scaleX(0.8900);">3108</span>
<span style="left:328.30px;top:538.26px;font-size:8.6px;color:#14303e;transform:scaleX(0.8900);">3114</span>
<span style="left:410.00px;top:538.26px;font-size:8.6px;color:#14303e;transform:scaleX(0.8900);">3181</span>
<span style="left:432.30px;top:538.26px;font-size:8.6px;color:#14303e;transform:scaleX(0.8900);">3211</span>
<span style="left:454.00px;top:538.26px;font-size:8.6px;color:#14303e;transform:scaleX(0.8900);">3232</span>
<span style="left:475.80px;top:538.26px;font-size:8.6px;color:#14303e;transform:scaleX(0.8900);">3253</span>
<span style="left:496.50px;top:538.26px;font-size:8.6px;color:#14303e;transform:scaleX(0.8900);">3274</span>
<span style="left:518.10px;top:538.26px;font-size:8.6px;color:#14303e;transform:scaleX(0.8900);">3295</span>
<span style="left:540.30px;top:538.26px;font-size:8.6px;color:#14303e;transform:scaleX(0.8900);">3317</span>
<span style="left:563.10px;top:538.26px;font-size:8.6px;color:#14303e;transform:scaleX(0.8900);">3339</span>
<span style="left:585.30px;top:538.26px;font-size:8.6px;color:#14303e;transform:scaleX(0.8900);">3361</span>
<span style="left:658.30px;top:538.26px;font-size:8.6px;color:#14303e;transform:scaleX(0.8900);">3371</span>
<span style="left:740.60px;top:538.26px;font-size:8.6px;color:#14303e;transform:scaleX(0.8900);">3376</span>
<div class="c" style="left:205.00px;top:557.16px;width:8.00px;height:10.6px"><span style="left:0.30px;top:0;font-size:8.6px;color:#c4dfec;transform:scaleX(0.8900);">3012</span></div>
<div class="c" style="left:213.00px;top:557.16px;width:14.00px;height:10.6px"><span style="left:-7.70px;top:0;font-size:8.6px;color:#0a0a0c;transform:scaleX(0.8900);text-shadow:0 0 1px #d0d0d0,0 0 1px #d0d0d0,0 0 1.5px #d0d0d0;">3012</span></div>
<span style="left:233.00px;top:557.16px;font-size:8.6px;color:#14303e;transform:scaleX(0.8900);">3047</span>
<span style="left:273.30px;top:557.16px;font-size:8.6px;color:#14303e;transform:scaleX(0.8900);">3087</span>
<span style="left:316.30px;top:557.16px;font-size:8.6px;color:#14303e;transform:scaleX(0.8900);">3111</span>
<span style="left:370.00px;top:557.16px;font-size:8.6px;color:#14303e;transform:scaleX(0.8900);">3149</span>
<span style="left:414.80px;top:557.16px;font-size:8.6px;color:#14303e;transform:scaleX(0.8900);">3188</span>
<span style="left:439.10px;top:557.16px;font-size:8.6px;color:#14303e;transform:scaleX(0.8900);">3217</span>
<span style="left:460.30px;top:557.16px;font-size:8.6px;color:#14303e;transform:scaleX(0.8900);">3239</span>
<span style="left:483.10px;top:557.16px;font-size:8.6px;color:#14303e;transform:scaleX(0.8900);">3261</span>
<span style="left:505.30px;top:557.16px;font-size:8.6px;color:#14303e;transform:scaleX(0.8900);">3283</span>
<span style="left:528.10px;top:557.16px;font-size:8.6px;color:#14303e;transform:scaleX(0.8900);">3305</span>
<span style="left:550.00px;top:557.16px;font-size:8.6px;color:#14303e;transform:scaleX(0.8900);">3326</span>
<span style="left:570.80px;top:557.16px;font-size:8.6px;color:#14303e;transform:scaleX(0.8900);">3347</span>
<span style="left:668.60px;top:557.16px;font-size:8.6px;color:#14303e;transform:scaleX(0.8900);">3372</span>
<span style="left:746.10px;top:557.16px;font-size:8.6px;color:#14303e;transform:scaleX(0.8900);">3377</span>
<span style="left:205.30px;top:575.76px;font-size:8.6px;color:#c4dfec;transform:scaleX(0.8900);">3008</span>
<span style="left:235.80px;top:575.76px;font-size:8.6px;color:#14303e;transform:scaleX(0.8900);">3050</span>
<span style="left:260.00px;top:575.76px;font-size:8.6px;color:#14303e;transform:scaleX(0.8900);">3074</span>
<span style="left:285.00px;top:575.76px;font-size:8.6px;color:#14303e;transform:scaleX(0.8900);">3098</span>
<span style="left:320.00px;top:575.76px;font-size:8.6px;color:#14303e;transform:scaleX(0.8900);">3112</span>
<span style="left:376.50px;top:575.76px;font-size:8.6px;color:#14303e;transform:scaleX(0.8900);">3156</span>
<span style="left:415.60px;top:575.76px;font-size:8.6px;color:#14303e;transform:scaleX(0.8900);">3191</span>
<span style="left:440.80px;top:575.76px;font-size:8.6px;color:#14303e;transform:scaleX(0.8900);">3219</span>
<span style="left:461.60px;top:575.76px;font-size:8.6px;color:#14303e;transform:scaleX(0.8900);">3240</span>
<span style="left:484.10px;top:575.76px;font-size:8.6px;color:#14303e;transform:scaleX(0.8900);">3262</span>
<span style="left:506.50px;top:575.76px;font-size:8.6px;color:#14303e;transform:scaleX(0.8900);">3284</span>
<span style="left:529.10px;top:575.76px;font-size:8.6px;color:#14303e;transform:scaleX(0.8900);">3306</span>
<span style="left:551.50px;top:575.76px;font-size:8.6px;color:#14303e;transform:scaleX(0.8900);">3328</span>
<span style="left:573.10px;top:575.76px;font-size:8.6px;color:#14303e;transform:scaleX(0.8900);">3349</span>
<span style="left:751.10px;top:575.76px;font-size:8.6px;color:#14303e;transform:scaleX(0.8900);">3378</span>
<span style="left:205.30px;top:594.26px;font-size:8.6px;color:#14303e;transform:scaleX(0.8900);">3019</span>
<span style="left:234.10px;top:594.26px;font-size:8.6px;color:#14303e;transform:scaleX(0.8900);">3048</span>
<span style="left:276.10px;top:594.26px;font-size:8.6px;color:#14303e;transform:scaleX(0.8900);">3089</span>
<span style="left:323.30px;top:594.26px;font-size:8.6px;color:#14303e;transform:scaleX(0.8900);">3113</span>
<span style="left:395.00px;top:594.26px;font-size:8.6px;color:#14303e;transform:scaleX(0.8900);">3173</span>
<span style="left:420.30px;top:594.26px;font-size:8.6px;color:#14303e;transform:scaleX(0.8900);">3199</span>
<span style="left:444.10px;top:594.26px;font-size:8.6px;color:#14303e;transform:scaleX(0.8900);">3222</span>
<span style="left:465.30px;top:594.26px;font-size:8.6px;color:#14303e;transform:scaleX(0.8900);">3243</span>
<span style="left:493.30px;top:594.26px;font-size:8.6px;color:#14303e;transform:scaleX(0.8900);">3270</span>
<span style="left:515.00px;top:594.26px;font-size:8.6px;color:#14303e;transform:scaleX(0.8900);">3292</span>
<span style="left:536.50px;top:594.26px;font-size:8.6px;color:#14303e;transform:scaleX(0.8900);">3313</span>
<span style="left:560.30px;top:594.26px;font-size:8.6px;color:#14303e;transform:scaleX(0.8900);">3336</span>
<span style="left:582.80px;top:594.26px;font-size:8.6px;color:#14303e;transform:scaleX(0.8900);">3358</span>
<span style="left:752.00px;top:594.26px;font-size:8.6px;color:#14303e;transform:scaleX(0.8900);">3379</span>
<span style="left:205.30px;top:612.96px;font-size:8.6px;color:#14303e;transform:scaleX(0.8900);">3014</span>
<span style="left:238.60px;top:612.96px;font-size:8.6px;color:#14303e;transform:scaleX(0.8900);">3053</span>
<span style="left:260.80px;top:612.96px;font-size:8.6px;color:#14303e;transform:scaleX(0.8900);">3075</span>
<span style="left:286.50px;top:612.96px;font-size:8.6px;color:#14303e;transform:scaleX(0.8900);">3099</span>
<span style="left:335.80px;top:612.96px;font-size:8.6px;color:#14303e;transform:scaleX(0.8900);">3116</span>
<span style="left:412.80px;top:612.96px;font-size:8.6px;color:#14303e;transform:scaleX(0.8900);">3182</span>
<span style="left:434.50px;top:612.96px;font-size:8.6px;color:#14303e;transform:scaleX(0.8900);">3213</span>
<span style="left:455.80px;top:612.96px;font-size:8.6px;color:#14303e;transform:scaleX(0.8900);">3234</span>
<span style="left:477.50px;top:612.96px;font-size:8.6px;color:#14303e;transform:scaleX(0.8900);">3255</span>
<span style="left:500.30px;top:612.96px;font-size:8.6px;color:#14303e;transform:scaleX(0.8900);">3277</span>
<span style="left:521.50px;top:612.96px;font-size:8.6px;color:#14303e;transform:scaleX(0.8900);">3298</span>
<span style="left:542.50px;top:612.96px;font-size:8.6px;color:#14303e;transform:scaleX(0.8900);">3319</span>
<span style="left:563.60px;top:612.96px;font-size:8.6px;color:#14303e;transform:scaleX(0.8900);">3340</span>
<span style="left:586.50px;top:612.96px;font-size:8.6px;color:#14303e;transform:scaleX(0.8900);">3362</span>
<span style="left:752.80px;top:612.96px;font-size:8.6px;color:#14303e;transform:scaleX(0.8900);">3380</span>
<span style="left:205.30px;top:631.76px;font-size:8.6px;color:#14303e;transform:scaleX(0.8900);">3017</span>
<span style="left:234.80px;top:631.76px;font-size:8.6px;color:#14303e;transform:scaleX(0.8900);">3049</span>
<span style="left:257.50px;top:631.76px;font-size:8.6px;color:#14303e;transform:scaleX(0.8900);">3071</span>
<span style="left:280.00px;top:631.76px;font-size:8.6px;color:#14303e;transform:scaleX(0.8900);">3093</span>
<span style="left:337.30px;top:631.76px;font-size:8.6px;color:#14303e;transform:scaleX(0.8900);">3117</span>
<span style="left:412.80px;top:631.76px;font-size:8.6px;color:#14303e;transform:scaleX(0.8900);">3183</span>
<span style="left:435.60px;top:631.76px;font-size:8.6px;color:#14303e;transform:scaleX(0.8900);">3214</span>
<span style="left:457.30px;top:631.76px;font-size:8.6px;color:#14303e;transform:scaleX(0.8900);">3235</span>
<span style="left:478.30px;top:631.76px;font-size:8.6px;color:#14303e;transform:scaleX(0.8900);">3256</span>
<span style="left:500.80px;top:631.76px;font-size:8.6px;color:#14303e;transform:scaleX(0.8900);">3278</span>
<span style="left:522.50px;top:631.76px;font-size:8.6px;color:#14303e;transform:scaleX(0.8900);">3299</span>
<span style="left:543.10px;top:631.76px;font-size:8.6px;color:#14303e;transform:scaleX(0.8900);">3320</span>
<span style="left:564.50px;top:631.76px;font-size:8.6px;color:#14303e;transform:scaleX(0.8900);">3341</span>
<span style="left:588.10px;top:631.76px;font-size:8.6px;color:#14303e;transform:scaleX(0.8900);">3364</span>
<span style="left:753.60px;top:631.76px;font-size:8.6px;color:#14303e;transform:scaleX(0.8900);">3381</span>
<span style="left:205.00px;top:664.55px;font-size:9.2px;color:#d8d8d8;transform:scaleX(0.9753);">3368 vkCmdDraw(5040, 1, 0, 0)</span>
<span style="left:436.00px;top:664.55px;font-size:9.2px;color:#d8d8d8;transform:scaleX(1.0231);">Selection duration:-</span>
<span style="left:655.00px;top:664.55px;font-size:9.2px;color:#d8d8d8;transform:scaleX(0.9497);">10,164.503 µs</span>
<span style="left:840.20px;top:132.54px;font-size:9.6px;color:#ffffff;font-weight:700;transform:scaleX(0.9870);">3368 vkCmdDraw(5040, 1, 0, 0)</span>
<span style="left:840.20px;top:145.64px;font-size:9.4px;color:#dadada;transform:scaleX(0.9846);">Launched from Queue index 0</span>
<span style="left:840.20px;top:158.34px;font-size:9.4px;color:#dadada;transform:scaleX(0.9610);">MeshSkinning.S.. / .. / .. / .. / Camera.RenderSkybox</span>
<span style="left:840.20px;top:180.04px;font-size:9.4px;color:#dadada;transform:scaleX(0.9819);">Start time</span>
<span style="left:937.00px;top:180.04px;font-size:9.4px;color:#dadada;transform:scaleX(0.9392);">10,143.484 µs</span>
<span style="left:840.20px;top:193.04px;font-size:9.4px;color:#dadada;transform:scaleX(0.9676);">End time</span>
<span style="left:937.00px;top:193.04px;font-size:9.4px;color:#dadada;transform:scaleX(0.9392);">10,160.934 µs</span>
<span style="left:840.20px;top:206.24px;font-size:9.4px;color:#dadada;transform:scaleX(1.0102);">Duration</span>
<span style="left:937.00px;top:206.24px;font-size:9.4px;color:#dadada;transform:scaleX(0.9305);">17.450 µs</span>
<span style="left:840.20px;top:219.24px;font-size:9.4px;color:#dadada;transform:scaleX(1.0174);">Work duration</span>
<span style="left:937.00px;top:219.24px;font-size:9.4px;color:#dadada;transform:scaleX(0.9305);">15.008 µs</span>
<span style="left:840.20px;top:232.14px;font-size:9.4px;color:#dadada;transform:scaleX(0.9852);">Hardware context</span>
<span style="left:937.00px;top:232.14px;font-size:9.4px;color:#dadada;transform:scaleX(0.8900);">2</span>
<span style="left:947.00px;top:232.14px;font-size:9.4px;color:#cc2030;transform:scaleX(1.0202);">rolled</span>
<span style="left:840.10px;top:254.64px;font-size:9.6px;color:#ffffff;font-weight:700;transform:scaleX(0.9236);">API shader hashes</span>
<span style="left:840.10px;top:271.94px;font-size:9.4px;color:#dadada;transform:scaleX(0.9359);">VS: 0xBE366E9A1C0408806ED59221196614A8</span>
<span style="left:840.10px;top:294.34px;font-size:9.4px;color:#dadada;transform:scaleX(0.9400);">FS: 0x4F2A5938BA547780999B15F1DD28D911</span>
<span style="left:840.10px;top:320.84px;font-size:9.6px;color:#ffffff;font-weight:700;transform:scaleX(0.9174);">API PSO hash</span>
<span style="left:840.10px;top:337.44px;font-size:9.4px;color:#dadada;transform:scaleX(0.9323);">0xD75CC816C0CA1A42</span>
<span style="left:840.10px;top:369.74px;font-size:9.6px;color:#ffffff;font-weight:700;transform:scaleX(0.9618);">Driver internal pipeline hash</span>
<span style="left:840.10px;top:386.24px;font-size:9.4px;color:#dadada;transform:scaleX(0.9449);">0x9D2516C60A99BB349D2516C60A99BB34</span>
<span style="left:840.10px;top:411.44px;font-size:9.6px;color:#ffffff;font-weight:700;transform:scaleX(0.9713);">Wavefronts</span>
<span style="left:840.10px;top:424.94px;font-size:9.4px;color:#dadada;transform:scaleX(1.0088);">RDNA wavefront distribution:</span>
<span style="left:857.00px;top:461.34px;font-size:9.4px;color:#dadada;transform:scaleX(0.9623);">SurfS wavefronts</span>
<span style="left:956.00px;top:461.34px;font-size:9.4px;color:#dadada;transform:scaleX(0.8900);">-</span>
<span style="left:857.00px;top:477.24px;font-size:9.4px;color:#dadada;transform:scaleX(0.9691);">PrimS wavefronts</span>
<span style="left:955.60px;top:477.24px;font-size:9.4px;color:#dadada;transform:scaleX(0.9319);">80 (94.12%)</span>
<span style="left:857.00px;top:493.14px;font-size:9.4px;color:#dadada;transform:scaleX(0.9495);">PS wavefronts</span>
<span style="left:955.60px;top:493.14px;font-size:9.4px;color:#dadada;transform:scaleX(0.9248);">5 (5.88%)</span>
<span style="left:857.00px;top:509.24px;font-size:9.4px;color:#dadada;transform:scaleX(0.9513);">CS wavefronts</span>
<span style="left:956.00px;top:509.24px;font-size:9.4px;color:#dadada;transform:scaleX(0.8900);">-</span>
<span style="left:857.00px;top:523.94px;font-size:9.6px;color:#ffffff;font-weight:700;transform:scaleX(0.9665);">Total wavefronts</span>
<span style="left:955.60px;top:523.94px;font-size:9.6px;color:#ffffff;font-weight:700;transform:scaleX(0.8900);">85</span>
<span style="left:857.00px;top:537.04px;font-size:9.6px;color:#ffffff;font-weight:700;transform:scaleX(0.9558);">Total threads</span>
<span style="left:840.20px;top:558.44px;font-size:9.6px;color:#ffffff;font-weight:700;transform:scaleX(0.9583);">RDNA shader stage timeline</span>
<span style="left:841.00px;top:608.94px;font-size:9.6px;color:#ffffff;font-weight:700;transform:scaleX(0.8498);">API Shader</span>
<span style="left:905.90px;top:608.94px;font-size:9.6px;color:#ffffff;font-weight:700;transform:scaleX(0.8900);">VGPR</span>
<span style="left:843.00px;top:626.64px;font-size:9.4px;color:#dadada;transform:scaleX(0.8900);">VS</span>
<span style="left:907.80px;top:626.64px;font-size:9.4px;color:#dadada;transform:scaleX(0.8479);">23 (24)</span>
<span style="left:843.00px;top:649.34px;font-size:9.4px;color:#dadada;transform:scaleX(0.8900);">TCS</span>
<span style="left:908.00px;top:649.34px;font-size:9.4px;color:#dadada;transform:scaleX(0.8900);">-</span>
</div>
<!-- vertical labels -->
<span class="v" style="left:12.5px;top:121.0px;font-size:9.3px;letter-spacing:-0.42px;">Hide legend</span>
<span class="v" style="left:1193.6px;top:120.8px;font-size:9.3px;letter-spacing:-0.46px;">Hide details</span>
<span class="v" style="left:200.6px;top:179.3px;font-size:9.2px;font-weight:400;color:#dcdcdc;letter-spacing:-0.15px;">Graphics</span>
<span class="v" style="left:200.6px;top:269.7px;font-size:9.2px;font-weight:400;color:#dcdcdc;letter-spacing:0.08px;">Async compute</span>

<!-- app icon -->
<svg style="left:0;top:2px" width="13" height="13" viewBox="0 0 13 13"><circle cx="6.7" cy="5.9" r="5.8" fill="#e0232e"/><path d="M5.1 2.900h2.500a1.900 1.900 0 0 1 0 3.800H6.300v2.700H5.100z" fill="#fff"/><circle cx="7.3" cy="4.800" r="0.700" fill="#e0232e"/></svg>
<!-- window controls -->
<svg style="left:1110px;top:0" width="90" height="16" viewBox="0 0 90 16" fill="none" stroke-width="1">
<path d="M3.7 7.7h7.4" stroke="#6a6a6a"/>
<path d="M36.3 6.2h5.4v5h-5.4zM38 6.2v-1.6h5.6v5h-1.9" stroke="#8a8a8a"/>
<path d="M69.2 4.2l7.2 7.2M76.4 4.2l-7.2 7.2" stroke="#a8a8a8"/>
</svg>
<!-- nav arrows -->
<svg style="left:20px;top:42px" width="64" height="24" viewBox="0 0 64 24"><polygon points="1.800,12.400 22.300,2 22.300,22.800" fill="#9a9a9a"/><polygon points="59,12.700 39.100,2.600 39.100,22.800" fill="#595959"/></svg>

<!-- left panel icons -->
<svg style="left:22px;top:122px" width="48" height="20" viewBox="0 0 48 20" fill="none">
<path d="M2.300 6.500h9.300a3.400 3.400 0 0 1 0 6.800H4.300" stroke="#f0f0f0" stroke-width="1.400"/>
<path d="M5.400 3.500L2.100 6.500l3.300 3" stroke="#f0f0f0" stroke-width="1.400"/>
<path d="M29.400 5.800l5.800 5.700 5.800-5.700" stroke="#b8b8b8" stroke-width="3"/>
</svg>
<!-- X + move + chevrons : wavefront block -->
<svg style="left:22px;top:182px" width="44" height="54" viewBox="0 0 44 54" fill="none">
<path d="M2.8 3.2l12.6 12.2M15.4 3.2L2.8 15.4" stroke="#ececec" stroke-width="1.6"/>
<g stroke="#e8e8e8" stroke-width="1.4" fill="none" stroke-linejoin="miter"><path d="M9 26.400000000000002v14.4M1.7999999999999998 33.6h14.4"/><path d="M6.0 29.700000000000003L9 26.400000000000002l3.0 3.3M6.0 37.50000000000001L9 40.800000000000004l3.0 -3.3M5.1 30.6L1.7999999999999998 33.6l3.3 3.0M12.899999999999999 30.6L16.2 33.6l-3.3 3.0"/></g>
<path d="M26.700 20.8l5.800 5.700 5.800-5.700" stroke="#b8b8b8" stroke-width="3"/>
<path d="M26.700 43.6l5.800 5.700 5.800-5.700" stroke="#b8b8b8" stroke-width="3"/>
</svg>
<!-- X + move + chevrons : event timeline block -->
<svg style="left:22px;top:370px" width="44" height="78" viewBox="0 0 44 78" fill="none">
<path d="M2.6 2.8l12.8 12.6M15.4 2.8L2.6 15.4" stroke="#ececec" stroke-width="1.6"/>
<g stroke="#e8e8e8" stroke-width="1.4" fill="none" stroke-linejoin="miter"><path d="M9 26.099999999999998v14.4M1.7999999999999998 33.3h14.4"/><path d="M6.0 29.4L9 26.099999999999998l3.0 3.3M6.0 37.2L9 40.5l3.0 -3.3M5.1 30.299999999999997L1.7999999999999998 33.3l3.3 3.0M12.899999999999999 30.299999999999997L16.2 33.3l-3.3 3.0"/></g>
<path d="M26.500 20.6l5.800 5.700 5.800-5.700" stroke="#b8b8b8" stroke-width="3"/>
<path d="M26.500 42.8l5.800 5.700 5.800-5.700" stroke="#b8b8b8" stroke-width="3"/>
<path d="M26.500 65.4l5.800 5.700 5.800-5.700" stroke="#b8b8b8" stroke-width="3"/>
</svg>
<!-- search icon in filter -->
<svg style="left:132px;top:469px" width="20" height="17" viewBox="0 0 20 17" fill="none" stroke="#a8a8a8"><circle cx="12.2" cy="6.4" r="4.2" stroke-width="1"/><path d="M9.2 9.6L3.6 15" stroke-width="1.5"/></svg>

<!-- zoom icons -->
<svg style="left:674px;top:118px" width="124" height="26" viewBox="0 0 124 26" fill="none" stroke="#e2e2e2">
<g id="mg"><circle cx="14" cy="11.800" r="6.500" stroke-width="1.400"/><path d="M9.400 16.500L5 20.600" stroke-width="2.500" stroke-linecap="round"/></g>
<rect x="10.600" y="8.400" width="6.800" height="6.800" rx="0.800" fill="#cfcfcf" stroke="none"/>
<g transform="translate(31.6 0)"><circle cx="14" cy="11.800" r="6.500" stroke-width="1.400"/><path d="M9.400 16.500L5 20.600" stroke-width="2.500" stroke-linecap="round"/><path d="M13 9v5.600l-3.600-2.800zM15 9v5.600l3.600-2.800z" fill="#e2e2e2" stroke="none"/></g>
<g transform="translate(63.5 0)"><circle cx="14" cy="11.800" r="6.500" stroke-width="1.400"/><path d="M9.400 16.500L5 20.600" stroke-width="2.500" stroke-linecap="round"/><path d="M9.600 11.800h8.800M14 7.400v8.800" stroke-width="1.900"/></g>
<g transform="translate(95.3 0)"><circle cx="14" cy="11.800" r="6.500" stroke-width="1.400"/><path d="M9.400 16.500L5 20.600" stroke-width="2.500" stroke-linecap="round"/><path d="M9.600 11.800h8.800" stroke-width="1.900"/></g>
</svg>

<!-- scroll arrows -->
<svg style="left:790px;top:178px" width="50" height="490" viewBox="0 0 50 490" fill="none" stroke="#c4c4c4" stroke-width="2">
<path d="M30.4 9.6l3.6-3.4 3.6 3.4"/>
<path d="M30.4 462.2l3.6 3.4 3.6-3.4"/>
<path d="M6.8 197.4l3.4-3.3 3.4 3.3"/>
</svg>
<svg style="left:204px;top:650px" width="592" height="12" viewBox="0 0 592 12" fill="none" stroke="#c4c4c4" stroke-width="2">
<path d="M8.6 2.6L5.4 5.8l3.2 3.2"/>
<path d="M582.6 2.6l3.2 3.2-3.2 3.2"/>
</svg>
<svg style="left:1166px;top:122px" width="16" height="14" viewBox="0 0 16 14" fill="none" stroke="#c4c4c4" stroke-width="1.9"><path d="M4.6 7.6l3.4-3.2 3.4 3.2"/></svg>

<!-- mouse cursor -->
<svg style="left:760px;top:260px" width="16" height="20" viewBox="0 0 16 20"><path d="M3 3.2v12.2l2.9-2.7 2.1 4.7 2.1-1-2.1-4.5h4z" fill="#fff" stroke="#111" stroke-width="0.9" stroke-linejoin="round"/></svg>

<!-- clipboard icons -->
<svg style="left:1037.8px;top:270.0px" width="12" height="14" viewBox="0 0 12 14"><rect x="0.700" y="2.100" width="9.900" height="10.200" rx="1.200" fill="none" stroke="#ececec" stroke-width="1.400"/><path d="M2.300 4.900V2.600H4.200L5.650 0.200L7.100 2.600H9V4.900z" fill="#ececec"/></svg>
<svg style="left:1039.6px;top:292.3px" width="12" height="14" viewBox="0 0 12 14"><rect x="0.700" y="2.100" width="9.900" height="10.200" rx="1.200" fill="none" stroke="#ececec" stroke-width="1.400"/><path d="M2.300 4.900V2.600H4.200L5.650 0.200L7.100 2.600H9V4.900z" fill="#ececec"/></svg>
<svg style="left:944.0px;top:335.8px" width="12" height="14" viewBox="0 0 12 14"><rect x="0.700" y="2.100" width="9.900" height="10.200" rx="1.200" fill="none" stroke="#ececec" stroke-width="1.400"/><path d="M2.300 4.900V2.600H4.200L5.650 0.200L7.100 2.600H9V4.900z" fill="#ececec"/></svg>
<svg style="left:1029.0px;top:384.5px" width="12" height="14" viewBox="0 0 12 14"><rect x="0.700" y="2.100" width="9.900" height="10.200" rx="1.200" fill="none" stroke="#ececec" stroke-width="1.400"/><path d="M2.300 4.900V2.600H4.200L5.650 0.200L7.100 2.600H9V4.900z" fill="#ececec"/></svg>

<div class="r">
<div style="left:937.40px;top:532.30px;width:258.20px;height:142.70px;background:#ffffff;"></div>
</div>
<svg style="left:0;top:0" width="1200" height="675" viewBox="0 0 1200 675">
<path d="M960.3 557.3C960.3 555.0 960.6 552.8 961.5 550.7C962.4 548.7 964.0 546.7 965.6 544.8C967.3 543.0 969.0 541.1 971.6 539.7C974.1 538.3 978.1 536.8 981.0 536.5C984.0 536.2 986.8 536.9 989.3 538.1C991.9 539.2 994.7 541.1 996.4 543.3C998.2 545.5 999.6 548.8 1000.0 551.3C1000.4 553.9 999.4 556.9 999.1 558.4C998.7 560.0 998.0 561.3 997.6 560.8C997.3 560.3 997.4 557.1 997.0 555.5C996.6 553.9 996.5 552.9 995.3 551.3C994.0 549.8 991.5 547.1 989.3 546.0C987.2 544.9 984.5 544.0 982.2 544.5C980.0 544.9 977.2 547.0 975.7 548.7C974.2 550.5 973.6 552.1 973.0 554.9C972.4 557.7 972.2 562.9 972.0 565.6C971.9 568.2 971.5 569.4 972.1 570.9C972.8 572.4 974.7 573.0 976.1 574.4C977.4 575.9 978.8 578.4 980.1 579.5C981.4 580.7 982.7 581.6 983.6 581.2C984.6 580.8 984.5 577.8 985.8 577.2C987.0 576.5 990.2 576.5 991.2 577.2C992.3 577.8 991.5 581.2 992.2 581.0C992.8 580.7 994.5 577.3 995.3 575.6C996.0 574.0 996.4 570.7 996.9 570.9C997.5 571.1 998.9 574.4 998.6 576.8C998.2 579.2 996.7 583.0 994.8 585.2C992.8 587.4 989.7 589.6 987.0 590.0C984.2 590.4 980.8 589.0 978.2 587.6C975.5 586.2 972.5 583.9 971.1 581.7C969.7 579.4 970.4 575.2 969.8 574.1C969.1 573.0 968.0 575.8 967.1 575.0C966.1 574.2 964.9 571.1 964.0 569.3C963.0 567.6 962.0 566.4 961.4 564.4C960.8 562.4 960.3 559.5 960.3 557.3Z" fill="#1c1c1c"/>
<path d="M975.8 561.5C976.6 561.1 978.7 558.9 980.4 558.7C982.2 558.4 985.3 559.9 986.3 560.1" fill="none" stroke="#1c1c1c" stroke-width="2.9" stroke-linecap="round"/>
<path d="M977.7 562.9C978.4 563.0 980.4 563.6 981.6 563.5C982.9 563.5 984.6 562.8 985.2 562.7" fill="none" stroke="#1c1c1c" stroke-width="0.9" stroke-linecap="round"/>
<path d="M990.8 563.9C991.3 563.6 993.0 562.1 994.1 562.0C995.2 561.9 996.8 563.2 997.4 563.4" fill="none" stroke="#1c1c1c" stroke-width="2.4" stroke-linecap="round"/>
<path d="M991.7 565.3C992.1 565.4 993.5 565.6 994.3 565.6C995.1 565.5 996.1 565.1 996.4 565.0" fill="none" stroke="#1c1c1c" stroke-width="0.8" stroke-linecap="round"/>
<path d="M985.8 571.5C986.3 571.6 987.8 572.2 988.7 572.2C989.7 572.2 991.2 571.6 991.7 571.5" fill="none" stroke="#1c1c1c" stroke-width="0.9" stroke-linecap="round"/>
<path d="M981.6 575.5C982.5 575.6 985.2 576.2 987.0 576.2C988.7 576.2 991.1 575.5 991.9 575.4" fill="none" stroke="#1c1c1c" stroke-width="0.9" stroke-linecap="round"/>
<path d="M967.1 567.7C967.3 568.1 968.4 569.4 968.6 570.3C968.8 571.2 968.1 572.5 968.0 572.9" fill="none" stroke="#fff" stroke-width="0.9" stroke-linecap="round"/>
<path d="M967.8 584.0 L970.4 582.9 L983.6 597.8 L981.3 601.6 L971.6 591.9 L967.3 587.1Z" fill="#1c1c1c" />
<path d="M978.7 596.4 L983.6 599.0 L986.3 603.7 L983.9 611.8 L980.1 605.9Z" fill="#1c1c1c" />
<path d="M990.3 592.8 L994.3 596.6 L991.9 604.0 L989.6 601.1Z" fill="#1c1c1c" />
<path d="M994.3 598.7C995.1 599.1 997.2 600.0 998.8 600.6C1000.4 601.3 1003.0 602.2 1003.8 602.5" fill="none" stroke="#1c1c1c" stroke-width="0.9" stroke-linecap="round"/>
<path d="M958.5 594.0 L968.0 589.0 L974.5 596.4 L977.2 602.5 L973.7 607.6 L969.8 605.9 L967.1 601.8 L964.2 601.1 L959.7 599.0Z" fill="#1c1c1c" />
<path d="M940.7 611.8C940.9 610.4 940.9 605.8 941.9 603.5C942.9 601.2 944.7 599.3 946.7 597.8C948.6 596.3 951.6 595.4 953.8 594.7C956.0 594.0 958.7 593.7 959.7 593.5" fill="none" stroke="#1c1c1c" stroke-width="1.3" stroke-linecap="round"/>
<path d="M943.1 595.0C941.6 596.2 941.8 599.1 941.3 602.1C940.9 605.1 940.6 608.0 940.5 612.8C940.4 617.5 940.5 625.2 941.0 630.6C941.4 635.9 942.0 641.0 943.1 644.8C944.3 648.5 946.5 650.3 947.9 653.1C949.2 655.8 950.2 658.5 951.4 661.4C952.6 664.2 953.5 670.1 955.0 670.1C956.4 670.1 957.7 664.6 960.3 661.4C962.9 658.2 968.5 653.7 970.4 650.9C972.3 648.2 971.0 647.3 971.8 644.8C972.6 642.3 975.9 638.1 975.3 636.0C974.8 633.9 969.9 633.9 968.2 632.0C966.6 630.1 966.4 628.0 965.3 624.6C964.2 621.2 963.3 615.3 961.7 611.6C960.1 607.8 957.7 604.9 955.8 602.1C953.9 599.3 952.3 596.2 950.2 595.0C948.1 593.8 944.6 593.8 943.1 595.0Z" fill="#1c1c1c"/>
<path d="M948.8 596.7C949.9 595.4 952.0 599.0 953.8 601.5C955.6 604.0 958.0 607.9 959.5 611.6C961.0 615.2 962.2 620.3 962.8 623.4C963.4 626.6 963.4 628.4 963.0 630.6C962.6 632.7 961.4 635.3 960.3 636.5C959.2 637.7 957.5 638.1 956.1 637.9C954.8 637.7 953.0 636.7 952.0 635.3C951.0 633.9 950.6 632.1 950.0 629.4C949.4 626.6 948.8 622.1 948.3 618.7C947.8 615.3 946.8 612.9 946.9 609.2C947.0 605.5 947.7 597.9 948.8 596.7Z" fill="#fff"/>
<path d="M954.7 647.1 L959.1 642.2 L961.7 645.4 L957.1 649.3Z" fill="#fff" />
<path d="M965.9 634.8 L970.4 636.0 L971.8 647.1 L967.3 646.0Z" fill="#fff" />
<path d="M956.7 603.9C957.3 605.0 959.5 608.1 960.3 610.4C961.1 612.7 961.3 616.3 961.5 617.5" fill="none" stroke="#1c1c1c" stroke-width="0.9" stroke-linecap="round"/>
<path d="M961.5 601.5C962.2 603.0 964.9 607.7 965.9 610.4C966.8 613.1 967.1 616.3 967.3 617.5" fill="none" stroke="#1c1c1c" stroke-width="1.0" stroke-linecap="round"/>
<path d="M970.4 634.1 L975.1 636.0 L987.0 635.3 L995.3 636.5 L1003.8 637.7 L1003.8 646.4 L995.3 644.1 L983.4 640.5 L972.7 640.7Z" fill="#1c1c1c" />
<circle cx="997.0" cy="641.5" r="1.8" fill="#fff"/>
<path d="M980.8 601.5C981.6 604.4 984.0 613.1 985.8 618.7C987.5 624.3 990.3 632.5 991.2 635.3" fill="none" stroke="#1c1c1c" stroke-width="0.9" stroke-linecap="round"/>
<path d="M988.1 600.9C988.8 603.7 990.9 612.1 992.2 617.5C993.5 623.0 995.3 630.9 996.0 633.5" fill="none" stroke="#1c1c1c" stroke-width="1.7" stroke-linecap="round"/>
<ellipse cx="985.2" cy="611.6" rx="1.4" ry="2.2" fill="#1c1c1c"/>
<ellipse cx="988.1" cy="623.4" rx="1.4" ry="2.2" fill="#1c1c1c"/>
<path d="M977.5 595.0 L983.4 595.0 L981.6 602.1 L978.7 599.7Z" fill="#1c1c1c" />
<path d="M989.6 595.0 L994.3 595.0 L993.4 603.3 L991.7 609.2Z" fill="#1c1c1c" />
<path d="M992.9 598.6C993.9 598.9 997.0 599.7 998.8 600.3C1000.6 601.0 1003.0 602.0 1003.8 602.3" fill="none" stroke="#1c1c1c" stroke-width="0.9" stroke-linecap="round"/>
<path d="M955.6 666.7C956.9 664.3 962.4 659.1 965.6 656.6C968.9 654.2 971.4 653.1 975.1 652.1C978.9 651.1 984.4 649.8 988.1 650.7C991.9 651.7 995.0 655.8 997.6 657.8C1000.2 659.8 1002.8 660.9 1003.8 662.8C1004.8 664.6 1007.2 667.7 1003.8 669.0C1000.4 670.2 991.2 670.1 983.4 670.4C975.7 670.7 962.0 671.5 957.3 670.9C952.7 670.2 954.2 669.1 955.6 666.7Z" fill="#fff" stroke="#1c1c1c" stroke-width="1.1" stroke-linecap="round"/>
<path d="M956.1 667.5 L985.8 666.6 L1003.8 664.5 L1003.8 669.4 L956.7 671.3Z" fill="#1c1c1c" />
<path d="M971.6 642.6C972.4 642.5 974.1 640.7 976.9 641.9C979.7 643.2 986.3 648.8 988.1 650.2" fill="none" stroke="#1c1c1c" stroke-width="0.9" stroke-linecap="round"/>
<path d="M943.3 645.7 L947.4 644.5 L949.7 650.7 L946.2 652.1Z" fill="#1c1c1c" />
</svg>
<div class="t">
<span style="left:1006.40px;top:534.74px;font-size:67.5px;color:#1e1e1e;font-weight:700;transform:scaleX(0.9156);-webkit-text-stroke:1.1px #1e1e1e;">UNITY</span>
<span style="left:1008.00px;top:598.62px;font-size:23.0px;color:#1e1e1e;font-weight:700;transform:scaleX(1.0090);-webkit-text-stroke:0.5px #1e1e1e;">PERFORMANCE</span>
<span style="left:1008.60px;top:622.47px;font-size:32px;color:#da5a2b;font-weight:700;transform:scaleX(0.9231);-webkit-text-stroke:0.5px #da5a2b;">TASKFORCE</span>
<span style="left:1009.60px;top:658.60px;font-size:12.4px;color:#2a2a2a;letter-spacing:1.952px;transform:scaleX(1.1800);">THEGAMEDEV.GURU</span>
</div>
</body></html>
